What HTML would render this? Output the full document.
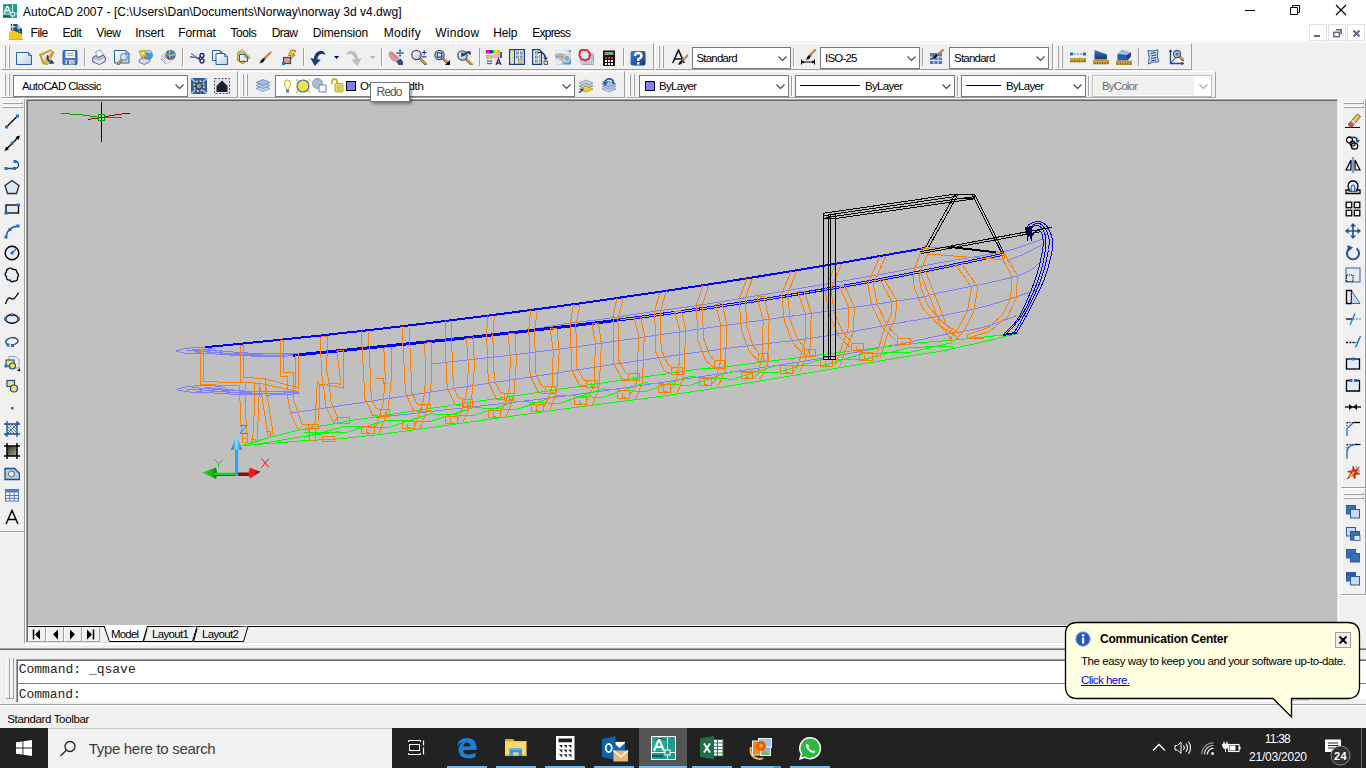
<!DOCTYPE html>
<html><head><meta charset="utf-8"><title>AutoCAD 2007</title>
<style>
html,body{margin:0;padding:0;}
body{width:1366px;height:768px;overflow:hidden;position:relative;background:#f0f0f0;font-family:"Liberation Sans",sans-serif;}
div,span,svg{position:absolute;box-sizing:border-box;}
.t{white-space:pre;display:block;}
.vl{width:1px;background:#a0a0a0;}
.hl{height:1px;background:#a0a0a0;}
.cb{background:#fff;border:1px solid #7a7a7a;}
</style></head>
<body>
<div style="left:0px;top:0px;width:1366px;height:41px;background:#fff;"></div>
<span class="t" style="left:23.00px;top:4.24px;font-size:12px;line-height:16px;letter-spacing:0.016px;">AutoCAD 2007 - [C:\Users\Dan\Documents\Norway\norway 3d v4.dwg]</span>
<span class="t" style="left:30.60px;top:24.84px;font-size:12px;line-height:16px;letter-spacing:-0.545px;">File</span>
<span class="t" style="left:62.40px;top:24.84px;font-size:12px;line-height:16px;letter-spacing:-0.393px;">Edit</span>
<span class="t" style="left:96.30px;top:24.84px;font-size:12px;line-height:16px;letter-spacing:-0.398px;">View</span>
<span class="t" style="left:135.20px;top:24.84px;font-size:12px;line-height:16px;letter-spacing:-0.242px;">Insert</span>
<span class="t" style="left:178.30px;top:24.84px;font-size:12px;line-height:16px;letter-spacing:-0.101px;">Format</span>
<span class="t" style="left:230.40px;top:24.84px;font-size:12px;line-height:16px;letter-spacing:-0.428px;">Tools</span>
<span class="t" style="left:271.70px;top:24.84px;font-size:12px;line-height:16px;letter-spacing:-0.601px;">Draw</span>
<span class="t" style="left:312.70px;top:24.84px;font-size:12px;line-height:16px;letter-spacing:-0.136px;">Dimension</span>
<span class="t" style="left:383.70px;top:24.84px;font-size:12px;line-height:16px;letter-spacing:0.331px;">Modify</span>
<span class="t" style="left:435.20px;top:24.84px;font-size:12px;line-height:16px;letter-spacing:0.264px;">Window</span>
<span class="t" style="left:493.20px;top:24.84px;font-size:12px;line-height:16px;letter-spacing:-0.160px;">Help</span>
<span class="t" style="left:532.30px;top:24.84px;font-size:12px;line-height:16px;letter-spacing:-0.775px;">Express</span>
<svg style="left:1240px;top:0px;" width="120" height="22" viewBox="0 0 120 22"><path d="M5 10.5H15" stroke="#000" fill="none"/><path d="M52.5 7.5V5.5H59.5V12.5H57.5M50.5 7.5H57.5V14.5H50.5Z" stroke="#000" fill="none"/><path d="M96 5L106 15M106 5L96 15" stroke="#000" stroke-width="1.1" fill="none"/></svg>
<div style="left:1309px;top:24px;width:18px;height:17px;background:#fff;border:1px solid #e3e3e3;"></div>
<div style="left:1328px;top:24px;width:18px;height:17px;background:#fff;border:1px solid #e3e3e3;"></div>
<div style="left:1347px;top:24px;width:18px;height:17px;background:#fff;border:1px solid #e3e3e3;"></div>
<svg style="left:1309px;top:24px;" width="57" height="18" viewBox="0 0 57 18"><rect x="5" y="11" width="6" height="2" fill="#5d6b80"/><path d="M27 5.8H32.2V10" stroke="#5d6b80" stroke-width="1.6" fill="none"/><rect x="24.8" y="8.3" width="5.6" height="4.4" stroke="#5d6b80" stroke-width="1.5" fill="none"/><path d="M44.5 6.5L50.5 12.5M50.5 6.5L44.5 12.5" stroke="#5d6b80" stroke-width="2" fill="none"/></svg>
<div style="left:0px;top:41px;width:1366px;height:2px;background:#f6f6f6;"></div>
<div style="left:1px;top:43px;width:653px;height:27px;border-top:1px solid #fff;border-left:1px solid #fff;border-right:1px solid #a0a0a0;border-bottom:1px solid #a0a0a0;"></div>
<div style="left:655px;top:43px;width:398px;height:27px;border-top:1px solid #fff;border-left:1px solid #fff;border-right:1px solid #a0a0a0;border-bottom:1px solid #a0a0a0;"></div>
<div style="left:1054px;top:43px;width:138px;height:27px;border-top:1px solid #fff;border-left:1px solid #fff;border-right:1px solid #a0a0a0;border-bottom:1px solid #a0a0a0;"></div>
<div style="left:1px;top:71px;width:237px;height:27px;border-top:1px solid #fff;border-left:1px solid #fff;border-right:1px solid #a0a0a0;border-bottom:1px solid #a0a0a0;"></div>
<div style="left:239px;top:71px;width:386px;height:27px;border-top:1px solid #fff;border-left:1px solid #fff;border-right:1px solid #a0a0a0;border-bottom:1px solid #a0a0a0;"></div>
<div style="left:626px;top:71px;width:590px;height:27px;border-top:1px solid #fff;border-left:1px solid #fff;border-right:1px solid #a0a0a0;border-bottom:1px solid #a0a0a0;"></div>
<div style="left:0px;top:98px;width:1366px;height:1px;background:#fff;"></div>
<div style="left:4px;top:46px;width:1px;height:22px;background:#fff;"></div><div style="left:5px;top:46px;width:1px;height:22px;background:#a0a0a0;"></div><div style="left:6px;top:46px;width:1px;height:22px;background:#696969;opacity:.0"></div><div style="left:8px;top:46px;width:1px;height:22px;background:#fff;"></div><div style="left:9px;top:46px;width:1px;height:22px;background:#a0a0a0;"></div><div style="left:10px;top:46px;width:1px;height:22px;background:#696969;opacity:.0"></div>
<div style="left:658px;top:46px;width:1px;height:22px;background:#fff;"></div><div style="left:659px;top:46px;width:1px;height:22px;background:#a0a0a0;"></div><div style="left:660px;top:46px;width:1px;height:22px;background:#696969;opacity:.0"></div><div style="left:662px;top:46px;width:1px;height:22px;background:#fff;"></div><div style="left:663px;top:46px;width:1px;height:22px;background:#a0a0a0;"></div><div style="left:664px;top:46px;width:1px;height:22px;background:#696969;opacity:.0"></div>
<div style="left:1057px;top:46px;width:1px;height:22px;background:#fff;"></div><div style="left:1058px;top:46px;width:1px;height:22px;background:#a0a0a0;"></div><div style="left:1059px;top:46px;width:1px;height:22px;background:#696969;opacity:.0"></div><div style="left:1061px;top:46px;width:1px;height:22px;background:#fff;"></div><div style="left:1062px;top:46px;width:1px;height:22px;background:#a0a0a0;"></div><div style="left:1063px;top:46px;width:1px;height:22px;background:#696969;opacity:.0"></div>
<div style="left:4px;top:74px;width:1px;height:22px;background:#fff;"></div><div style="left:5px;top:74px;width:1px;height:22px;background:#a0a0a0;"></div><div style="left:6px;top:74px;width:1px;height:22px;background:#696969;opacity:.0"></div><div style="left:8px;top:74px;width:1px;height:22px;background:#fff;"></div><div style="left:9px;top:74px;width:1px;height:22px;background:#a0a0a0;"></div><div style="left:10px;top:74px;width:1px;height:22px;background:#696969;opacity:.0"></div>
<div style="left:242px;top:74px;width:1px;height:22px;background:#fff;"></div><div style="left:243px;top:74px;width:1px;height:22px;background:#a0a0a0;"></div><div style="left:244px;top:74px;width:1px;height:22px;background:#696969;opacity:.0"></div><div style="left:246px;top:74px;width:1px;height:22px;background:#fff;"></div><div style="left:247px;top:74px;width:1px;height:22px;background:#a0a0a0;"></div><div style="left:248px;top:74px;width:1px;height:22px;background:#696969;opacity:.0"></div>
<div style="left:629px;top:74px;width:1px;height:22px;background:#fff;"></div><div style="left:630px;top:74px;width:1px;height:22px;background:#a0a0a0;"></div><div style="left:631px;top:74px;width:1px;height:22px;background:#696969;opacity:.0"></div><div style="left:633px;top:74px;width:1px;height:22px;background:#fff;"></div><div style="left:634px;top:74px;width:1px;height:22px;background:#a0a0a0;"></div><div style="left:635px;top:74px;width:1px;height:22px;background:#696969;opacity:.0"></div>
<div style="left:84px;top:48px;width:1px;height:18px;background:#a0a0a0;"></div>
<div style="left:85px;top:48px;width:1px;height:18px;background:#fff;"></div>
<div style="left:182px;top:48px;width:1px;height:18px;background:#a0a0a0;"></div>
<div style="left:183px;top:48px;width:1px;height:18px;background:#fff;"></div>
<div style="left:303px;top:48px;width:1px;height:18px;background:#a0a0a0;"></div>
<div style="left:304px;top:48px;width:1px;height:18px;background:#fff;"></div>
<div style="left:381px;top:48px;width:1px;height:18px;background:#a0a0a0;"></div>
<div style="left:382px;top:48px;width:1px;height:18px;background:#fff;"></div>
<div style="left:479px;top:48px;width:1px;height:18px;background:#a0a0a0;"></div>
<div style="left:480px;top:48px;width:1px;height:18px;background:#fff;"></div>
<div style="left:623px;top:48px;width:1px;height:18px;background:#a0a0a0;"></div>
<div style="left:624px;top:48px;width:1px;height:18px;background:#fff;"></div>
<div style="left:793px;top:48px;width:1px;height:18px;background:#a0a0a0;"></div>
<div style="left:794px;top:48px;width:1px;height:18px;background:#fff;"></div>
<div style="left:922px;top:48px;width:1px;height:18px;background:#a0a0a0;"></div>
<div style="left:923px;top:48px;width:1px;height:18px;background:#fff;"></div>
<div style="left:1138px;top:48px;width:1px;height:18px;background:#a0a0a0;"></div>
<div style="left:1139px;top:48px;width:1px;height:18px;background:#fff;"></div>
<div style="left:791px;top:76px;width:1px;height:20px;background:#a0a0a0;"></div>
<div style="left:792px;top:76px;width:1px;height:20px;background:#fff;"></div>
<div style="left:957px;top:76px;width:1px;height:20px;background:#a0a0a0;"></div>
<div style="left:958px;top:76px;width:1px;height:20px;background:#fff;"></div>
<div style="left:1088px;top:76px;width:1px;height:20px;background:#a0a0a0;"></div>
<div style="left:1089px;top:76px;width:1px;height:20px;background:#fff;"></div>
<div style="left:692px;top:47px;width:99px;height:22px;background:#fff;border:1px solid #7a7a7a;"></div><svg style="left:777px;top:54px;" width="12" height="9" viewBox="0 0 12 9"><path d="M1.5 2.5L5.5 6.5L9.5 2.5" stroke="#444" stroke-width="1.1" fill="none"/></svg>
<span class="t" style="left:696.40px;top:50.82px;font-size:11.5px;line-height:15px;letter-spacing:-0.768px;">Standard</span>
<div style="left:820px;top:47px;width:100px;height:22px;background:#fff;border:1px solid #7a7a7a;"></div><svg style="left:906px;top:54px;" width="12" height="9" viewBox="0 0 12 9"><path d="M1.5 2.5L5.5 6.5L9.5 2.5" stroke="#444" stroke-width="1.1" fill="none"/></svg>
<span class="t" style="left:825.00px;top:50.82px;font-size:11.5px;line-height:15px;letter-spacing:-0.787px;">ISO-25</span>
<div style="left:949px;top:47px;width:100px;height:22px;background:#fff;border:1px solid #7a7a7a;"></div><svg style="left:1035px;top:54px;" width="12" height="9" viewBox="0 0 12 9"><path d="M1.5 2.5L5.5 6.5L9.5 2.5" stroke="#444" stroke-width="1.1" fill="none"/></svg>
<span class="t" style="left:954.00px;top:50.82px;font-size:11.5px;line-height:15px;letter-spacing:-0.768px;">Standard</span>
<div style="left:13px;top:75px;width:175px;height:22px;background:#fff;border:1px solid #7a7a7a;"></div><svg style="left:174px;top:82px;" width="12" height="9" viewBox="0 0 12 9"><path d="M1.5 2.5L5.5 6.5L9.5 2.5" stroke="#444" stroke-width="1.1" fill="none"/></svg>
<span class="t" style="left:22.00px;top:78.72px;font-size:11.5px;line-height:15px;letter-spacing:-0.621px;">AutoCAD Classic</span>
<div style="left:275px;top:75px;width:300px;height:22px;background:#fff;border:1px solid #7a7a7a;"></div><svg style="left:561px;top:82px;" width="12" height="9" viewBox="0 0 12 9"><path d="M1.5 2.5L5.5 6.5L9.5 2.5" stroke="#444" stroke-width="1.1" fill="none"/></svg>
<span class="t" style="left:360.00px;top:78.72px;font-size:11.5px;line-height:15px;letter-spacing:-0.206px;">Overall width</span>
<div style="left:639px;top:75px;width:150px;height:22px;background:#fff;border:1px solid #7a7a7a;"></div><svg style="left:775px;top:82px;" width="12" height="9" viewBox="0 0 12 9"><path d="M1.5 2.5L5.5 6.5L9.5 2.5" stroke="#444" stroke-width="1.1" fill="none"/></svg>
<div style="left:645px;top:81px;width:10px;height:10px;background:#8080ff;border:1px solid #000;"></div>
<span class="t" style="left:659.00px;top:78.72px;font-size:11.5px;line-height:15px;letter-spacing:-0.698px;">ByLayer</span>
<div style="left:795px;top:75px;width:160px;height:22px;background:#fff;border:1px solid #7a7a7a;"></div><svg style="left:941px;top:82px;" width="12" height="9" viewBox="0 0 12 9"><path d="M1.5 2.5L5.5 6.5L9.5 2.5" stroke="#444" stroke-width="1.1" fill="none"/></svg>
<div style="left:800px;top:85px;width:60px;height:1px;background:#000;"></div>
<span class="t" style="left:865.00px;top:78.72px;font-size:11.5px;line-height:15px;letter-spacing:-0.698px;">ByLayer</span>
<div style="left:961px;top:75px;width:125px;height:22px;background:#fff;border:1px solid #7a7a7a;"></div><svg style="left:1072px;top:82px;" width="12" height="9" viewBox="0 0 12 9"><path d="M1.5 2.5L5.5 6.5L9.5 2.5" stroke="#444" stroke-width="1.1" fill="none"/></svg>
<div style="left:966px;top:85px;width:35px;height:1px;background:#000;"></div>
<span class="t" style="left:1006.00px;top:78.72px;font-size:11.5px;line-height:15px;letter-spacing:-0.698px;">ByLayer</span>
<div style="left:1092px;top:75px;width:120px;height:22px;background:#fff;border:1px solid #bfbfbf;"></div><div style="left:1094px;top:77px;width:100px;height:18px;background:#f0f0f0;"></div><svg style="left:1198px;top:82px;" width="12" height="9" viewBox="0 0 12 9"><path d="M1.5 2.5L5.5 6.5L9.5 2.5" stroke="#a8a8a8" stroke-width="1.1" fill="none"/></svg>
<span class="t" style="left:1102.00px;top:78.72px;font-size:11.5px;line-height:15px;letter-spacing:-0.817px;color:#6d6d6d;">ByColor</span>
<div style="left:0px;top:99px;width:1366px;height:549px;background:#f0f0f0;"></div>
<div style="left:24px;top:99px;width:1px;height:544px;background:#a0a0a0;"></div>
<div style="left:25px;top:99px;width:1px;height:544px;background:#fff;"></div>
<div style="left:26px;top:99px;width:1313px;height:546px;background:#fff;"></div>
<div style="left:26px;top:99px;width:1312px;height:545px;background:#e3e3e3;"></div>
<div style="left:26px;top:99px;width:1311px;height:544px;background:#a0a0a0;"></div>
<div style="left:27px;top:100px;width:1310px;height:543px;background:#696969;"></div>
<div style="left:28px;top:101px;width:1309px;height:524px;background:#c0c0c0;"></div>
<div style="left:28px;top:625px;width:1309px;height:1px;background:#fff;"></div>
<div style="left:28px;top:626px;width:1309px;height:1px;background:#000;"></div>
<div style="left:28px;top:627px;width:1309px;height:15px;background:#f0f0f0;"></div>
<div style="left:26px;top:642px;width:1312px;height:1px;background:#e3e3e3;"></div>
<div style="left:26px;top:643px;width:1313px;height:2px;background:#fff;"></div>
<div style="left:3px;top:102px;width:20px;height:1px;background:#fff;"></div>
<div style="left:3px;top:103px;width:20px;height:1px;background:#a0a0a0;"></div>
<div style="left:22px;top:102px;width:1px;height:2px;background:#a0a0a0;"></div>
<div style="left:3px;top:106px;width:20px;height:1px;background:#fff;"></div>
<div style="left:3px;top:107px;width:20px;height:1px;background:#a0a0a0;"></div>
<div style="left:22px;top:106px;width:1px;height:2px;background:#a0a0a0;"></div>
<div style="left:0px;top:531px;width:24px;height:1px;background:#a0a0a0;"></div>
<div style="left:0px;top:532px;width:24px;height:1px;background:#fff;"></div>
<div style="left:1341px;top:99px;width:1px;height:496px;background:#fff;"></div>
<div style="left:1365px;top:99px;width:1px;height:496px;background:#a0a0a0;"></div>
<div style="left:1344px;top:102px;width:20px;height:1px;background:#fff;"></div>
<div style="left:1344px;top:103px;width:20px;height:1px;background:#a0a0a0;"></div>
<div style="left:1363px;top:102px;width:1px;height:2px;background:#a0a0a0;"></div>
<div style="left:1344px;top:106px;width:20px;height:1px;background:#fff;"></div>
<div style="left:1344px;top:107px;width:20px;height:1px;background:#a0a0a0;"></div>
<div style="left:1363px;top:106px;width:1px;height:2px;background:#a0a0a0;"></div>
<div style="left:1341px;top:487px;width:25px;height:1px;background:#a0a0a0;"></div>
<div style="left:1341px;top:488px;width:25px;height:1px;background:#fff;"></div>
<div style="left:1344px;top:493px;width:20px;height:1px;background:#fff;"></div>
<div style="left:1344px;top:494px;width:20px;height:1px;background:#a0a0a0;"></div>
<div style="left:1363px;top:493px;width:1px;height:2px;background:#a0a0a0;"></div>
<div style="left:1344px;top:497px;width:20px;height:1px;background:#fff;"></div>
<div style="left:1344px;top:498px;width:20px;height:1px;background:#a0a0a0;"></div>
<div style="left:1363px;top:497px;width:1px;height:2px;background:#a0a0a0;"></div>
<div style="left:1341px;top:594px;width:25px;height:1px;background:#a0a0a0;"></div>
<div style="left:1341px;top:595px;width:25px;height:1px;background:#fff;"></div>
<div style="left:28px;top:627px;width:18px;height:15px;border-right:1px solid #a0a0a0;border-bottom:1px solid #a0a0a0;border-left:1px solid #fff;background:#f0f0f0;"></div>
<div style="left:46px;top:627px;width:18px;height:15px;border-right:1px solid #a0a0a0;border-bottom:1px solid #a0a0a0;border-left:1px solid #fff;background:#f0f0f0;"></div>
<div style="left:64px;top:627px;width:18px;height:15px;border-right:1px solid #a0a0a0;border-bottom:1px solid #a0a0a0;border-left:1px solid #fff;background:#f0f0f0;"></div>
<div style="left:82px;top:627px;width:18px;height:15px;border-right:1px solid #a0a0a0;border-bottom:1px solid #a0a0a0;border-left:1px solid #fff;background:#f0f0f0;"></div>
<svg style="left:28px;top:626px;" width="72" height="17" viewBox="0 0 72 17"><path d="M5.500 3.500V13.500" stroke="#000" stroke-width="1.5"/><path d="M12 3.500L7 8.5L12 13.500Z" fill="#000"/><path d="M30 3.500L25 8.5L30 13.500Z" fill="#000"/><path d="M42 3.500L47 8.5L42 13.500Z" fill="#000"/><path d="M59 3.500L64 8.5L59 13.500Z" fill="#000"/><path d="M65.500 3.500V13.500" stroke="#000" stroke-width="1.5"/></svg>
<svg style="left:100px;top:626px;" width="160" height="18" viewBox="0 0 160 18"><path d="M4 0L9.5 15.5H43L47.5 0" fill="#fff" stroke="#000"/><path d="M47 3L43.5 15.5H92.500L97 0.5" fill="#f0f0f0" stroke="#000"/><path d="M97 3L93.500 15.5H143.500L148 0.5" fill="#f0f0f0" stroke="#000"/></svg>
<span class="t" style="left:111.00px;top:626.52px;font-size:11.5px;line-height:15px;letter-spacing:-0.830px;">Model</span>
<span class="t" style="left:152.00px;top:626.52px;font-size:11.5px;line-height:15px;letter-spacing:-0.654px;">Layout1</span>
<span class="t" style="left:202.00px;top:626.52px;font-size:11.5px;line-height:15px;letter-spacing:-0.654px;">Layout2</span>
<div style="left:0px;top:648px;width:1366px;height:1px;background:#a0a0a0;"></div>
<div style="left:0px;top:649px;width:1366px;height:1px;background:#696969;"></div>
<div style="left:6px;top:658px;width:1px;height:41px;background:#fff;"></div>
<div style="left:9px;top:658px;width:1px;height:41px;background:#a0a0a0;"></div>
<div style="left:6px;top:698px;width:4px;height:1px;background:#a0a0a0;"></div>
<div style="left:10px;top:658px;width:1px;height:41px;background:#fff;"></div>
<div style="left:13px;top:658px;width:1px;height:41px;background:#a0a0a0;"></div>
<div style="left:10px;top:698px;width:4px;height:1px;background:#a0a0a0;"></div>
<div style="left:16px;top:659px;width:1350px;height:43px;background:#fff;border-left:1px solid #a0a0a0;border-top:1px solid #a0a0a0;"></div>
<div style="left:17px;top:660px;width:1349px;height:42px;background:#fff;border-left:1px solid #696969;border-top:1px solid #696969;"></div>
<div style="left:18px;top:683px;width:1348px;height:1px;background:#808080;"></div>
<span class="t" style="left:18.70px;top:660.74px;font-size:13px;line-height:17px;letter-spacing:-0.002px;color:#222;font-family:'Liberation Mono',monospace;">Command: _qsave</span>
<span class="t" style="left:18.70px;top:685.64px;font-size:13px;line-height:17px;letter-spacing:-0.059px;color:#222;font-family:'Liberation Mono',monospace;">Command:</span>
<div style="left:1292px;top:699px;width:17px;height:2px;background:#cdcdcd;"></div>
<div style="left:1309px;top:699px;width:57px;height:3px;background:#f0f0f0;"></div>
<div style="left:0px;top:704px;width:1366px;height:1px;background:#a0a0a0;"></div>
<div style="left:0px;top:705px;width:1366px;height:1px;background:#fff;"></div>
<span class="t" style="left:7.30px;top:711.72px;font-size:11.5px;line-height:15px;letter-spacing:-0.359px;">Standard Toolbar</span>
<div style="left:0px;top:728px;width:1366px;height:40px;background:#222;"></div>
<div style="left:48px;top:728px;width:344px;height:40px;background:#f2f2f2;border-top:1px solid #c8c8c8;"></div>
<span class="t" style="left:88.70px;top:738.80px;font-size:15px;line-height:20px;letter-spacing:-0.310px;color:#3c3c3c;">Type here to search</span>
<svg style="left:16px;top:740px;" width="16" height="16" viewBox="0 0 16 16"><path d="M0 2.3L6.5 1.4V7.6H0ZM7.4 1.3L16 0V7.6H7.4ZM0 8.4H6.5V14.6L0 13.7ZM7.4 8.4H16V16L7.4 14.7Z" fill="#fff"/></svg>
<svg style="left:59px;top:740px;" width="18" height="18" viewBox="0 0 18 18"><circle cx="11" cy="6.5" r="5" stroke="#222" stroke-width="1.3" fill="none"/><path d="M7.5 10L1.5 16" stroke="#222" stroke-width="1.3"/></svg>
<div style="left:639px;top:728px;width:48px;height:40px;background:#555;"></div>
<div style="left:447px;top:766px;width:40px;height:2px;background:#76b9ed;"></div>
<div style="left:496px;top:766px;width:40px;height:2px;background:#76b9ed;"></div>
<div style="left:545px;top:766px;width:40px;height:2px;background:#76b9ed;"></div>
<div style="left:594px;top:766px;width:40px;height:2px;background:#76b9ed;"></div>
<div style="left:692px;top:766px;width:40px;height:2px;background:#76b9ed;"></div>
<div style="left:741px;top:766px;width:40px;height:2px;background:#76b9ed;"></div>
<div style="left:790px;top:766px;width:40px;height:2px;background:#76b9ed;"></div>
<div style="left:639px;top:766px;width:48px;height:2px;background:#76b9ed;"></div>
<span class="t" style="left:1264.80px;top:731.24px;font-size:12px;line-height:16px;letter-spacing:-0.785px;color:#fff;">11:38</span>
<span class="t" style="left:1249.00px;top:749.14px;font-size:12px;line-height:16px;letter-spacing:-0.229px;color:#fff;">21/03/2020</span>
<div style="left:1361px;top:728px;width:1px;height:40px;background:#6a6a6a;"></div>
<svg style="left:1060px;top:618px;" width="306" height="104" viewBox="0 0 306 104"><path d="M17.5 4.5H287.5Q299.5 4.5 299.5 16.5V68.5Q299.5 80.5 287.5 80.5H231.5V99L213 80.5H17.5Q5.5 80.5 5.5 68.5V16.5Q5.5 4.5 17.5 4.5Z" fill="#ffffe1" stroke="#000" stroke-width="1.300"/></svg>
<span class="t" style="left:1100.00px;top:630.84px;font-size:12px;line-height:16px;letter-spacing:-0.211px;font-weight:bold;">Communication Center</span>
<span class="t" style="left:1081.00px;top:653.52px;font-size:11.5px;line-height:15px;letter-spacing:-0.415px;">The easy way to keep you and your software up-to-date.</span>
<span class="t" style="left:1081.00px;top:672.52px;font-size:11.5px;line-height:15px;letter-spacing:-0.532px;color:#0000ff;text-decoration:underline;">Click here.</span>
<div style="left:1335px;top:632px;width:16px;height:16px;background:#f0f0f0;border:1px solid #a0a0a0;"></div>
<svg style="left:1335px;top:632px;" width="16" height="16" viewBox="0 0 16 16"><path d="M4.5 4.5L11.5 11.5M11.5 4.5L4.5 11.5" stroke="#000" stroke-width="2" fill="none"/></svg>
<svg style="left:1075px;top:631px;" width="16" height="16" viewBox="0 0 16 16"><circle cx="8" cy="8" r="7.3" fill="#2a55c8" stroke="#9fb4e8" stroke-width="1"/><rect x="7" y="6.5" width="2.2" height="6" fill="#fff"/><circle cx="8.1" cy="4.3" r="1.3" fill="#fff"/></svg>
<div style="left:370px;top:82px;width:40px;height:20px;background:#fff;border:1px solid #767676;box-shadow:2px 2px 3px rgba(0,0,0,.4);"></div>
<span class="t" style="left:376.50px;top:84.14px;font-size:12px;line-height:16px;letter-spacing:-0.896px;color:#575757;">Redo</span>
<svg style="left:16px;top:49px;" width="16" height="16" viewBox="0 0 16 16"><defs><linearGradient id="g1" x1="0" y1="0" x2="1" y2="1"><stop offset="0" stop-color="#ffffff"/><stop offset="1" stop-color="#b9d5dc"/></linearGradient></defs><path d="M0.5 3.5H12.5L15.5 6.5V15.5H0.5Z" fill="url(#g1)" stroke="#2b5ca8" stroke-width="1"/><path d="M12.5 3.5V6.5H15.5" fill="none" stroke="#2b5ca8" stroke-width=".8"/></svg>
<svg style="left:39px;top:49px;" width="16" height="16" viewBox="0 0 16 16"><path d="M.5 5.500L11.500 .8L15 3.500L8.500 15.500L4 15Z" fill="#dcaa30" stroke="#a87c18" stroke-width=".7"/><path d="M2.500 6.500L11.500 2L12.500 3L5 12Z" fill="#f0d890"/><path d="M3 7.500L12 2.800L6 12.500Z" fill="#dbe8f6"/><path d="M5 13L8.500 15.500L12 9L7 8Z" fill="#e6b83c"/><path d="M9 6.500Q7 10.500 11.500 12.800" stroke="#1f3f7a" stroke-width="1.900" fill="none"/><path d="M10 15L15.500 14.500L12.500 10.500Z" fill="#1f3f7a"/></svg>
<svg style="left:62px;top:49px;" width="16" height="16" viewBox="0 0 16 16"><rect x="1" y="1.500" width="14" height="14" rx="1" fill="#4878d0" stroke="#2c4c9c" stroke-width=".9"/><rect x="3.500" y="2" width="9.500" height="7" fill="#f2f6fc"/><path d="M5 4.500H11.500M5 6.500H11.500" stroke="#8ca8d8" stroke-width=".9"/><rect x="3.500" y="11" width="9" height="4.500" fill="#d0d8e4"/><rect x="5" y="11.500" width="2" height="4" fill="#3c64b8"/><rect x="9" y="12" width="2.500" height="3" fill="#b8b888"/></svg>
<svg style="left:91px;top:49px;" width="16" height="16" viewBox="0 0 16 16"><path d="M4.500 3L9 .8L12.500 6L7 8.500Z" fill="#fff" stroke="#8890b8" stroke-width=".9"/><path d="M1.500 8.500L5 6.500L7 8.500L12.500 6L14.500 9L14 12.500L8.500 15.500L2 13Z" fill="#b4bcdc" stroke="#4f5a98" stroke-width="1"/><path d="M3 11L8 13L13.500 10" stroke="#fff" stroke-width="1.300" fill="none"/><path d="M4 12.500L8.500 14.500L12.500 12" stroke="#e8ecf8" stroke-width="1" fill="none"/></svg>
<svg style="left:114px;top:49px;" width="16" height="16" viewBox="0 0 16 16"><defs><linearGradient id="g2" x1="0" y1="0" x2="1" y2="1"><stop offset="0" stop-color="#ffffff"/><stop offset="1" stop-color="#b9d5dc"/></linearGradient></defs><path d="M0.5 1.5H12L15 4.5V14H0.5Z" fill="url(#g2)" stroke="#2b5ca8" stroke-width="1"/><path d="M12 1.5V4.5H15" fill="none" stroke="#2b5ca8" stroke-width=".8"/><defs><linearGradient id="g3" x1="0" y1="0" x2="1" y2="1"><stop offset="0" stop-color="#ffffff"/><stop offset="1" stop-color="#9cc4e8"/></linearGradient></defs><path d="M7.94 10.58L4 15.5" stroke="#8a5a20" stroke-width="2.600" stroke-linecap="round"/><path d="M8.24 10.58L4 15.2" stroke="#e8a550" stroke-width="1.200" stroke-linecap="round"/><circle cx="10" cy="8" r="3.3" fill="url(#g3)" stroke="#7a98c4" stroke-width="1.300"/></svg>
<svg style="left:137px;top:49px;" width="16" height="16" viewBox="0 0 16 16"><circle cx="11" cy="6" r="5" fill="#3f9ad8"/><path d="M8 3Q11 1 14 4" stroke="#bfe8ff" stroke-width="1.5" fill="none"/><path d="M2 11L6 9L13 10.5L12.5 13L7.5 15.5L2.5 13.5Z" fill="#d5daee" stroke="#5f6aa8" stroke-width=".9"/><path d="M2 2L8.5 1L9.5 7L4.5 9Z" fill="#e6bb28" stroke="#b88a10" stroke-width=".6"/><path d="M4.5 3.5L5.5 5.5L7 3" stroke="#fff" stroke-width="1" fill="none"/></svg>
<svg style="left:160px;top:49px;" width="16" height="16" viewBox="0 0 16 16"><path d="M1 6L6 4V12L1 10Z" fill="#c9d6ee"/><path d="M1 10L6 15L11 12" fill="none" stroke="#8a93a8" stroke-width="1"/><path d="M6 4L11 6V12L6 15Z" fill="#f4f7fc"/><circle cx="10.5" cy="6" r="5.3" fill="#2e8fd0"/><path d="M6 5Q10 8 15.5 5M10 .8Q8 6 11 11.2" stroke="#e8c020" stroke-width="1.1" fill="none"/><path d="M6.5 8.5Q11 10 15 8M8 1.5Q7 6 9 11" stroke="#d03030" stroke-width="1" fill="none"/></svg>
<svg style="left:189px;top:49px;" width="16" height="16" viewBox="0 0 16 16"><path d="M1 7.5L10 9.5M2 4.5L10 10" stroke="#3a4a8a" stroke-width="1" fill="none"/><path d="M1 8.5L10.5 9.5L1.5 7Z" fill="#6070a8"/><circle cx="13" cy="6.5" r="2" fill="none" stroke="#1a2a6a" stroke-width="1.3"/><circle cx="13" cy="12" r="2" fill="none" stroke="#1a2a6a" stroke-width="1.3"/><path d="M9.5 9.5L11.5 7.5M9.5 9.5L11.5 11" stroke="#1a2a6a" stroke-width="1.3"/></svg>
<svg style="left:212px;top:49px;" width="16" height="16" viewBox="0 0 16 16"><defs><linearGradient id="g4" x1="0" y1="0" x2="1" y2="1"><stop offset="0" stop-color="#ffffff"/><stop offset="1" stop-color="#b9d5dc"/></linearGradient></defs><path d="M0.5 1.5H8L10.5 4V11.5H0.5Z" fill="url(#g4)" stroke="#2b5ca8" stroke-width="1"/><path d="M8 1.5V4H10.5" fill="none" stroke="#2b5ca8" stroke-width=".8"/><defs><linearGradient id="g5" x1="0" y1="0" x2="1" y2="1"><stop offset="0" stop-color="#ffffff"/><stop offset="1" stop-color="#b9d5dc"/></linearGradient></defs><path d="M4 4.5H12.5L15.5 7.5V15.5H4Z" fill="url(#g5)" stroke="#2b5ca8" stroke-width="1"/><path d="M12.5 4.5V7.5H15.5" fill="none" stroke="#2b5ca8" stroke-width=".8"/></svg>
<svg style="left:235px;top:49px;" width="16" height="16" viewBox="0 0 16 16"><path d="M3 3L8 1.5L15 8.5L8 15L2 11Z" fill="#e6c04a" stroke="#b8922a" stroke-width="1"/><path d="M5 2.5L7 .5L9 2" fill="#fff" stroke="#666" stroke-width=".7"/><defs><linearGradient id="g6" x1="0" y1="0" x2="1" y2="1"><stop offset="0" stop-color="#ffffff"/><stop offset="1" stop-color="#b9d5dc"/></linearGradient></defs><path d="M4.5 5.5H10L12.5 8V12.5H4.5Z" fill="url(#g6)" stroke="#2b5ca8" stroke-width="1"/><path d="M10 5.5V8H12.5" fill="none" stroke="#2b5ca8" stroke-width=".8"/></svg>
<svg style="left:258px;top:49px;" width="16" height="16" viewBox="0 0 16 16"><path d="M1.50 14.50L5.12 13.28L7.23 10.33L5.67 8.77L3.14 11.30Z" fill="#111"/><path d="M6.45 9.55L8.10 7.90" stroke="#5a6a70" stroke-width="2.200"/><path d="M8.10 7.90L12.50 3.50" stroke="#c98a4a" stroke-width="2.400" stroke-linecap="round"/></svg>
<svg style="left:281px;top:49px;" width="16" height="16" viewBox="0 0 16 16"><path d="M10 1L15 1.5L11.5 6H14L8 12L10 6.5H7.5Z" fill="#f2d21e" stroke="#7a5a10" stroke-width=".7"/><rect x="2.5" y="8.500" width="7" height="6" fill="#f49a6a" stroke="#1f4b8f" stroke-width="1.2"/><rect x="1" y="13" width="3" height="3" fill="#1e6fd0"/></svg>
<svg style="left:310px;top:50px;" width="16" height="16" viewBox="0 0 16 16"><path d="M15.500 5Q14.500 .8 10.500 .8Q5 1.500 3.800 8.800L.3 8L4.800 16L10.800 9.800L7.300 9.300Q8 4.800 11 4Q13.500 3.500 15.500 5Z" fill="#1c3f7c"/></svg>
<svg style="left:346px;top:50px;" width="16" height="16" viewBox="0 0 16 16"><path d="M0.5 5 Q1.5 0.8 5.5 0.8 Q11 1.5 12.2 8.8 L15.7 8 L11.2 16 L5.2 9.8 L8.7 9.3 Q8 4.8 5 4 Q2.5 3.5 0.5 5 Z" fill="#b9bec6"/></svg>
<svg style="left:388px;top:49px;" width="16" height="16" viewBox="0 0 16 16"><path d="M1 4Q2 2 4 3L11 9L9 13L4 11Q1 8 1 4Z" fill="#d99a9a" stroke="#b87878" stroke-width=".6"/><path d="M2.500 4L8 9M4 3.500L9 8" stroke="#b06a6a" stroke-width=".6"/><path d="M8.500 12.500L12.500 9.500L15 12.500V16H10.500Z" fill="#24508f"/><path d="M12 1V7M9 4H15" stroke="#24508f" stroke-width="1"/><path d="M12 0L13.300 1.800H10.700ZM12 8L13.300 6.200H10.700ZM8 4L9.800 2.700V5.300ZM16 4L14.200 2.700V5.300Z" fill="#24508f"/></svg>
<svg style="left:411px;top:49px;" width="16" height="16" viewBox="0 0 16 16"><defs><linearGradient id="g7" x1="0" y1="0" x2="1" y2="1"><stop offset="0" stop-color="#ffffff"/><stop offset="1" stop-color="#9cc4e8"/></linearGradient></defs><path d="M8.75 9.25L14.5 15" stroke="#8a5a20" stroke-width="2.600" stroke-linecap="round"/><path d="M9.05 9.25L14.5 14.7" stroke="#e8a550" stroke-width="1.200" stroke-linecap="round"/><circle cx="5.5" cy="6" r="4.6" fill="url(#g7)" stroke="#4a4f58" stroke-width="1.300"/><path d="M11 3.500H15.500M13.250 1.200V5.800M11 7.800H15.500" stroke="#1f3f7a" stroke-width="1.200"/></svg>
<svg style="left:434px;top:49px;" width="16" height="16" viewBox="0 0 16 16"><defs><linearGradient id="g8" x1="0" y1="0" x2="1" y2="1"><stop offset="0" stop-color="#ffffff"/><stop offset="1" stop-color="#9cc4e8"/></linearGradient></defs><path d="M8.75 9.25L12.5 13" stroke="#8a5a20" stroke-width="2.600" stroke-linecap="round"/><path d="M9.05 9.25L12.5 12.7" stroke="#e8a550" stroke-width="1.200" stroke-linecap="round"/><circle cx="5.5" cy="6" r="4.6" fill="url(#g8)" stroke="#4a4f58" stroke-width="1.300"/><rect x="3.300" y="3.800" width="4.400" height="4.400" fill="none" stroke="#1f3f8f" stroke-width="1.200"/><path d="M16 11V16H11Z" fill="#000"/></svg>
<svg style="left:457px;top:49px;" width="16" height="16" viewBox="0 0 16 16"><defs><linearGradient id="g9" x1="0" y1="0" x2="1" y2="1"><stop offset="0" stop-color="#ffffff"/><stop offset="1" stop-color="#9cc4e8"/></linearGradient></defs><path d="M8.75 9.75L14.5 15.5" stroke="#8a5a20" stroke-width="2.600" stroke-linecap="round"/><path d="M9.05 9.75L14.5 15.2" stroke="#e8a550" stroke-width="1.200" stroke-linecap="round"/><circle cx="5.5" cy="6.5" r="4.6" fill="url(#g9)" stroke="#4a4f58" stroke-width="1.300"/><path d="M14 5Q14 1 10 2.500L10.500 4.500Q12.500 3.500 12 6Z" fill="#1f3f7a"/><path d="M4 8L4.500 3L9 6Z" fill="#1f3f7a"/><path d="M6 6L10.500 3" stroke="#1f3f7a" stroke-width="1.800"/></svg>
<svg style="left:486px;top:49px;" width="16" height="16" viewBox="0 0 16 16"><defs><linearGradient id="rb" x1="0" x2="1" y1="0" y2="0"><stop offset="0" stop-color="#f00"/><stop offset=".2" stop-color="#f0f"/><stop offset=".4" stop-color="#00f"/><stop offset=".55" stop-color="#0f0"/><stop offset=".75" stop-color="#ff0"/><stop offset="1" stop-color="#f60"/></linearGradient></defs><rect x="0" y="1" width="13.500" height="3.500" fill="url(#rb)"/><path d="M4 8L11 3.500L14 5.500V8L9 10Z" fill="#e8b4b0"/><rect x="14" y="3" width="2" height="6" fill="#2a60b0"/><rect x="0" y="6.500" width="5.500" height="3" fill="#d8d048" stroke="#8890a0" stroke-width=".5"/><path d="M1 11.500Q3.500 13 6 11.500M1 14Q3.500 15.500 6 14" stroke="#3a5aa0" stroke-width="1.200" fill="none"/><path d="M10 16L12.500 9.500L15 16M11 14H14" stroke="#2a3550" stroke-width="1.300" fill="none"/></svg>
<svg style="left:509px;top:49px;" width="16" height="16" viewBox="0 0 16 16"><rect x=".6" y=".6" width="14.800" height="14.800" fill="#dfe8f4" stroke="#173c80" stroke-width="1.200"/><path d="M5.500 1V15" stroke="#173c80"/><path d="M3.500 2V14" stroke="#e8d020" stroke-width="1.400" stroke-dasharray="1.500 1.500"/><rect x="7.5" y="3" width="2" height="2" fill="#e8e040" stroke="#24508f" stroke-width=".5"/><rect x="11.5" y="3" width="2" height="2" fill="#e8e040" stroke="#24508f" stroke-width=".5"/><rect x="7.5" y="7" width="2" height="2" fill="#e8e040" stroke="#24508f" stroke-width=".5"/><rect x="11.5" y="7" width="2" height="2" fill="#e8e040" stroke="#24508f" stroke-width=".5"/><rect x="9.500" y="10.500" width="3.500" height="3.500" fill="#f0e850" stroke="#24508f" stroke-width=".5"/></svg>
<svg style="left:532px;top:49px;" width="16" height="16" viewBox="0 0 16 16"><path d="M.6 .6H7.500L9.500 2.500V15.400H.6Z" fill="#dfe8f4" stroke="#173c80" stroke-width="1.200"/><path d="M7.500 6V15" stroke="#8aa0c8"/><rect x="3.5" y="3" width="2" height="2" fill="#e8e040" stroke="#24508f" stroke-width=".5"/><rect x="3.5" y="7" width="2" height="2" fill="#e8e040" stroke="#24508f" stroke-width=".5"/><rect x="3.5" y="11" width="2" height="2" fill="#e8e040" stroke="#24508f" stroke-width=".5"/><path d="M6 3.500Q12 2 13.500 9" stroke="#173c80" stroke-width="1.600" fill="none"/><path d="M11 8.500H16L13.500 11.500Z" fill="#173c80"/><rect x="12" y="12" width="3.500" height="3.500" fill="#f0e850" stroke="#173c80" stroke-width=".8"/></svg>
<svg style="left:555px;top:49px;" width="16" height="16" viewBox="0 0 16 16"><rect x="0" y="1" width="16" height="14.500" fill="#5c9ad0"/><path d="M0 1H13L16 4V9L6 15.500H0Z" fill="#d4dade"/><path d="M0 5.500Q6 2.500 12 6Q15 9 13 12L6 15.500Q9 11 0 9.500Z" fill="#b4bcc2"/><path d="M0 9.500Q8 10 7 15.500H0Z" fill="#e4e8ec"/><ellipse cx="12" cy="9.500" rx="2.800" ry="3.500" fill="#9aa2aa" stroke="#e8ecf0" stroke-width=".9"/><path d="M1 3Q7 1.500 12 4.500" stroke="#fff" stroke-width="1.300" fill="none"/><path d="M1 7.500Q6 6 10 9" stroke="#8a9298" stroke-width=".9" fill="none"/></svg>
<svg style="left:578px;top:49px;" width="16" height="16" viewBox="0 0 16 16"><path d="M5 4.500H15.500V15.500H4" fill="none" stroke="#9aa8c0"/><path d="M3.500 6H14V14H2.500" fill="none" stroke="#8a98b4"/><rect x="1.500" y="5" width="11" height="8" fill="#b4ccee"/><path d="M3 1.500Q5 -.3 7 1.300Q10 .3 10.500 3Q13 4.500 11.300 7Q12.300 10 9.300 10.300Q7.500 12.300 5.500 10.500Q2.500 11 2.500 8Q.3 6.500 2 4.300Q1 2 3 1.500Z" fill="#dfe8f6" stroke="#e81828" stroke-width="1.800"/></svg>
<svg style="left:601px;top:50px;" width="16" height="16" viewBox="0 0 16 16"><rect x="2" y="0.500" width="12" height="15.500" fill="#111"/><rect x="3.500" y="2" width="9" height="3" fill="#7fa070"/><rect x="4" y="7" width="2" height="2" fill="#e02020"/><rect x="7" y="7" width="2" height="2" fill="#e02020"/><rect x="10" y="7" width="2" height="2" fill="#e02020"/><rect x="4" y="10" width="2" height="2" fill="#fff"/><rect x="4" y="13" width="2" height="2" fill="#fff"/><rect x="7" y="10" width="2" height="2" fill="#fff"/><rect x="7" y="13" width="2" height="2" fill="#fff"/><rect x="10" y="10" width="2" height="2" fill="#fff"/><rect x="10" y="13" width="2" height="2" fill="#fff"/></svg>
<svg style="left:630px;top:50px;" width="16" height="16" viewBox="0 0 16 16"><defs><linearGradient id="hg" x1="0" y1="0" x2="1" y2="1"><stop offset="0" stop-color="#3a7fd0"/><stop offset="1" stop-color="#123a78"/></linearGradient></defs><rect x=".5" y="1" width="15" height="14.500" rx="2" fill="url(#hg)"/><path d="M5 6Q5 3 8 3Q11.500 3 11.500 6Q11.500 8 8.300 9V11" stroke="#fff" stroke-width="2.300" fill="none"/><rect x="7" y="12.200" width="2.500" height="2.300" fill="#fff"/></svg>
<svg style="left:672px;top:49px;" width="16" height="16" viewBox="0 0 16 16"><path d="M.8 14L6.500 1L12.200 14M3 10H10" stroke="#111" stroke-width="1.600" fill="none"/><path d="M6.00 16.00L9.29 15.11L11.05 12.50L9.50 10.95L7.31 13.13Z" fill="#111"/><path d="M10.28 11.72L11.70 10.30" stroke="#5a6a70" stroke-width="2.200"/><path d="M11.70 10.30L15.50 6.50" stroke="#c98a4a" stroke-width="2.400" stroke-linecap="round"/></svg>
<svg style="left:800px;top:49px;" width="16" height="16" viewBox="0 0 16 16"><path d="M1 13H15M1.500 10.500V15.500M14.500 10.500V15.500" stroke="#000" stroke-width="1"/><path d="M1 13L4 11.500V14.500ZM15 13L12 11.500V14.500Z" fill="#000"/><path d="M6.00 11.00L9.24 9.94L10.87 7.24L9.23 5.76L7.16 8.06Z" fill="#111"/><path d="M10.05 6.50L11.40 5.00" stroke="#5a6a70" stroke-width="2.200"/><path d="M11.40 5.00L15.00 1.00" stroke="#c98a4a" stroke-width="2.400" stroke-linecap="round"/></svg>
<svg style="left:929px;top:49px;" width="16" height="16" viewBox="0 0 16 16"><rect x="1" y="4" width="12" height="11" fill="#5577c8"/><path d="M1 8H13M1 11.500H13M5 7V15M9 7V15" stroke="#dfe6f6" stroke-width="1"/><path d="M3.00 10.00L6.50 9.34L8.65 6.80L7.25 5.10L4.72 7.17Z" fill="#111"/><path d="M7.95 5.95L9.60 4.60" stroke="#5a6a70" stroke-width="2.200"/><path d="M9.60 4.60L14.00 1.00" stroke="#c98a4a" stroke-width="2.400" stroke-linecap="round"/></svg>
<svg style="left:1070px;top:49px;" width="16" height="16" viewBox="0 0 16 16"><rect x="0" y="3.5" width="3" height="3" fill="#1e6fd0"/><rect x="13" y="3.5" width="3" height="3" fill="#1e6fd0"/><path d="M3.500 5H13" stroke="#1e6fd0" stroke-width="1.200" stroke-dasharray="2 1.300"/><rect x="0" y="9.5" width="16" height="3.500" fill="#e0a818" stroke="#8a6408" stroke-width=".5"/><path d="M2 11V13M4.500 11V13M7 11V13M9.500 11V13M12 11V13M14.500 11V13" stroke="#5a4000" stroke-width=".7"/></svg>
<svg style="left:1093px;top:49px;" width="16" height="16" viewBox="0 0 16 16"><defs><linearGradient id="ar" x1="0" y1="0" x2="0" y2="1"><stop offset="0" stop-color="#3c74c0"/><stop offset="1" stop-color="#173a78"/></linearGradient></defs><path d="M1.500 1L14 5.500V10.500H1.500Z" fill="url(#ar)"/><rect x="0" y="11.5" width="16" height="3.500" fill="#e0a818" stroke="#8a6408" stroke-width=".5"/><path d="M2 13V15M4.500 13V15M7 13V15M9.500 13V15M12 13V15M14.500 13V15" stroke="#5a4000" stroke-width=".7"/></svg>
<svg style="left:1116px;top:49px;" width="16" height="16" viewBox="0 0 16 16"><path d="M1.500 5L6 1L15 3.500V7L11.500 11.500H1.500Z" fill="#2d5da8"/><path d="M1.500 5L6 1L15 3.500L11 6Z" fill="#9ec0e8"/><path d="M11 6L15 3.500V7L11.500 11.500Z" fill="#1d3f80"/><rect x="0" y="12" width="16" height="3.500" fill="#e0a818" stroke="#8a6408" stroke-width=".5"/><path d="M2 13.5V15.5M4.500 13.5V15.5M7 13.5V15.5M9.500 13.5V15.5M12 13.5V15.5M14.500 13.5V15.5" stroke="#5a4000" stroke-width=".7"/></svg>
<svg style="left:1145px;top:49px;" width="16" height="16" viewBox="0 0 16 16"><path d="M3 1.500Q8 3 13 .8Q11.500 7 13.500 13Q8 12 3.500 15Q5 8 3 1.500Z" fill="#c6d6ec" stroke="#3a62a8" stroke-width="1"/><path d="M5.500 4.500L11 3.500M5.800 7L11.200 6M6 9.500L11.500 8.500M6 12L11 11" stroke="#1f3f7a" stroke-width=".9"/></svg>
<svg style="left:1168px;top:49px;" width="16" height="16" viewBox="0 0 16 16"><path d="M2.500 1V14.500H16" stroke="#1f4b8f" stroke-width="1.300" fill="none"/><path d="M2.500 0L4.300 3H.7ZM16 14.500L13 12.700V16.300Z" fill="#1f4b8f"/><path d="M3 14L8 8" stroke="#1f4b8f" stroke-width="1.100"/><defs><linearGradient id="g10" x1="0" y1="0" x2="1" y2="1"><stop offset="0" stop-color="#ffffff"/><stop offset="1" stop-color="#9cc4e8"/></linearGradient></defs><path d="M11.47 7.47L15 11" stroke="#8a5a20" stroke-width="2.600" stroke-linecap="round"/><path d="M11.77 7.47L15 10.7" stroke="#e8a550" stroke-width="1.200" stroke-linecap="round"/><circle cx="9" cy="5" r="3.5" fill="url(#g10)" stroke="#4a4f58" stroke-width="1.300"/><rect x="7.500" y="3.500" width="3" height="3" fill="#1e6fd0"/></svg>
<svg style="left:334px;top:56px;" width="6" height="4" viewBox="0 0 6 4"><path d="M0 0H5L2.500 3Z" fill="#00007a"/></svg>
<svg style="left:370px;top:56px;" width="6" height="4" viewBox="0 0 6 4"><path d="M0 0H5L2.500 3Z" fill="#b4b4c8"/></svg>
<svg style="left:191px;top:78px;" width="16" height="16" viewBox="0 0 16 16"><rect x="0" y="0" width="16" height="16" fill="#2f5f98"/><path d="M0 0L4 4M16 0L12 4M0 16L4 12M16 16L12 12" stroke="#a8c4e0" stroke-width="1.500"/><circle cx="8" cy="8" r="5" fill="#4a4a4a" stroke="#d0d0d0" stroke-width="1.600" stroke-dasharray="2.200 1.700"/><circle cx="8" cy="8" r="2.200" fill="#6fa0d8"/></svg>
<svg style="left:214px;top:78px;" width="16" height="16" viewBox="0 0 16 16"><rect x=".5" y=".5" width="15" height="15" fill="#dbe2ea" stroke="#555" stroke-width="1" stroke-dasharray="2 1.500"/><path d="M2.500 8L8 2.500L13.500 8V14H2.500Z" fill="#1e2228"/></svg>
<svg style="left:255px;top:77px;" width="16" height="16" viewBox="0 0 16 16"><path d="M1 11.5L8 8.5L15 11.5L8 14.5Z" fill="#c9d6e8" stroke="#6f88aa" stroke-width=".7"/><path d="M1 8.5L8 5.5L15 8.5L8 11.5Z" fill="#b7cae3" stroke="#6f88aa" stroke-width=".7"/><path d="M1 5.5L8 2.5L15 5.5L8 8.5Z" fill="#a3bfe3" stroke="#5f7aa8" stroke-width=".7"/></svg>
<svg style="left:578px;top:77px;" width="16" height="16" viewBox="0 0 16 16"><path d="M1 6L8 3L15 6L8 9Z" fill="#c9d6e8" stroke="#6f88aa" stroke-width=".7"/><path d="M1 9L8 6L15 9L8 12Z" fill="#b7cae3" stroke="#6f88aa" stroke-width=".7"/><path d="M1 12L8 9L15 12L8 15Z" fill="#e8d038" stroke="#a89010" stroke-width=".7"/><path d="M1 16L5 12" stroke="#1f3f7a" stroke-width="1.300"/><path d="M5.500 11.500L5 14.500L2.500 12Z" fill="#1f3f7a"/></svg>
<svg style="left:601px;top:77px;" width="16" height="16" viewBox="0 0 16 16"><path d="M1 12L8 9L15 12L8 15Z" fill="#c9d6e8" stroke="#6f88aa" stroke-width=".7"/><path d="M1 9.5L8 6.5L15 9.5L8 12.5Z" fill="#b7cae3" stroke="#6f88aa" stroke-width=".7"/><path d="M1 7L8 4L15 7L8 10Z" fill="#a3bfe3" stroke="#5f7aa8" stroke-width=".7"/><path d="M4 6Q4.500 1.500 9.500 2Q13 3 12.500 7" stroke="#2a5aa0" stroke-width="1.800" fill="none"/><path d="M1.500 4.500L7 5L4 9Z" fill="#2a5aa0"/></svg>
<svg style="left:283px;top:79px;" width="9" height="14" viewBox="0 0 8 13.5"><path d="M4 0.800Q.8 1 .8 4.500Q1 6.500 2.800 8.500V10.500H5.200V8.500Q7 6.500 7.200 4.500Q7.200 1 4 .8Z" fill="#fdfad0" stroke="#b8a020" stroke-width=".9"/><rect x="2.600" y="10.500" width="2.800" height="2.500" fill="#5070c0"/></svg>
<svg style="left:296px;top:79px;" width="14" height="14" viewBox="0 0 14 14"><circle cx="7" cy="7" r="6" fill="#f4e048" stroke="#2f6fc0" stroke-width="1.200"/><path d="M0 0L2 2M14 0L12 2M0 14L2 12M14 14L12 12" stroke="#e8c820" stroke-width="1.500"/></svg>
<svg style="left:312px;top:78px;" width="15" height="15" viewBox="0 0 15 15"><circle cx="5.500" cy="5.500" r="5" fill="#9cbce0" stroke="#6f90c0" stroke-width=".8"/><circle cx="5.500" cy="5.500" r="2.500" fill="none" stroke="#d8c060" stroke-width="1.200"/><rect x="7" y="7" width="7" height="7" fill="#f4f6fa" stroke="#6f88b0" stroke-width="1"/></svg>
<svg style="left:330px;top:78px;" width="14" height="15" viewBox="0 0 14 15"><path d="M2 6V3.500Q2 1 4.500 1Q7 1 7 3.500V5" stroke="#c8b020" stroke-width="1.800" fill="none"/><rect x="5" y="5.500" width="8" height="8.500" rx="1" fill="#e4e070" stroke="#a8a020" stroke-width=".9"/><path d="M7 8H11M7 10H11M7 12H11" stroke="#b0a830" stroke-width=".8"/></svg>
<div style="left:346px;top:81px;width:10px;height:10px;background:#8080ff;border:1px solid #000;"></div>
<svg style="left:4px;top:113px;" width="16" height="16" viewBox="0 0 16 16"><path d="M2.500 14L13.500 3" stroke="#000" stroke-width="1.300"/><rect x="1" y="12.5" width="3" height="3" fill="#1e6fd0"/><rect x="12" y="1.5" width="3" height="3" fill="#1e6fd0"/></svg>
<svg style="left:4px;top:135px;" width="16" height="16" viewBox="0 0 16 16"><path d="M2 14.500L14.500 2" stroke="#000" stroke-width="1.300"/><path d="M.5 16L2 11.500L5 14.500ZM16 .5L11.500 2L14.500 5Z" fill="#000"/><rect x="6.7" y="6.7" width="2.8" height="2.8" fill="#1e6fd0"/></svg>
<svg style="left:4px;top:157px;" width="16" height="16" viewBox="0 0 16 16"><path d="M2 11.500H10.500Q15 11 14.500 7.500Q14 4 10.500 4.500" stroke="#1f4b8f" stroke-width="1.300" fill="none"/><rect x="0.5" y="10" width="3" height="3" fill="#1e6fd0"/><rect x="9" y="10" width="3" height="3" fill="#1e6fd0"/><rect x="9.5" y="3" width="3" height="3" fill="#1e6fd0"/></svg>
<svg style="left:4px;top:179px;" width="16" height="16" viewBox="0 0 16 16"><path d="M8 1.500L15 6.500L12.500 14.500H3.500L1 6.500Z" fill="#dfe8f2" stroke="#1c2c48" stroke-width="1.300"/></svg>
<svg style="left:4px;top:201px;" width="16" height="16" viewBox="0 0 16 16"><rect x="2" y="4" width="12.500" height="8" fill="#dfe8f2" stroke="#000" stroke-width="1.300"/><rect x="0.5" y="10.5" width="3" height="3" fill="#1e6fd0"/><rect x="13" y="2.5" width="3" height="3" fill="#1e6fd0"/></svg>
<svg style="left:4px;top:223px;" width="16" height="16" viewBox="0 0 16 16"><path d="M2 14Q3 4.500 13.500 3" stroke="#1f4b8f" stroke-width="1.400" fill="none"/><rect x="0.5" y="12.5" width="3" height="3" fill="#1e6fd0"/><rect x="12.5" y="1.5" width="3" height="3" fill="#1e6fd0"/><rect x="4.5" y="5" width="3" height="3" fill="#1e6fd0"/></svg>
<svg style="left:4px;top:245px;" width="16" height="16" viewBox="0 0 16 16"><circle cx="8" cy="8" r="6.800" fill="#e4ecf4" stroke="#000" stroke-width="1.400"/><path d="M8 8L12 4" stroke="#1e6fd0" stroke-width="1.300"/><rect x="6.6" y="6.6" width="2.8" height="2.8" fill="#1e6fd0"/></svg>
<svg style="left:4px;top:267px;" width="16" height="16" viewBox="0 0 16 16"><path d="M4 2Q7 0 9 2.500Q13 2 13 5.500Q15.500 8 13.500 10.500Q14 14.500 10 14Q7.500 16 6 13Q2 13.500 2.500 9.500Q-.5 7 2.500 5Q2 2.500 4 2Z" fill="#e4ecf4" stroke="#000" stroke-width="1.300"/></svg>
<svg style="left:4px;top:290px;" width="16" height="16" viewBox="0 0 16 16"><path d="M1.500 14Q4 6 7 8.500T14.500 2.500" stroke="#000" stroke-width="1.300" fill="none"/></svg>
<svg style="left:4px;top:311px;" width="16" height="16" viewBox="0 0 16 16"><ellipse cx="8" cy="8" rx="6.500" ry="4.300" fill="#e4ecf4" stroke="#000" stroke-width="1.400"/><rect x="0" y="6.5" width="3" height="3" fill="#1e6fd0"/><rect x="13" y="6.5" width="3" height="3" fill="#1e6fd0"/><rect x="6.5" y="2.3" width="3" height="3" fill="#1e6fd0"/></svg>
<svg style="left:4px;top:333px;" width="16" height="16" viewBox="0 0 16 16"><path d="M3.500 11.500Q.5 9.500 2.500 7Q6 3.500 11.500 5Q15.500 7 13 10Q11 11.500 8.500 12" stroke="#1f3f7a" stroke-width="1.300" fill="none"/><rect x="2.5" y="10.5" width="3" height="3" fill="#1e6fd0"/><rect x="7" y="11" width="3" height="3" fill="#1e6fd0"/></svg>
<svg style="left:4px;top:355px;" width="16" height="16" viewBox="0 0 16 16"><path d="M5 1.500H12L15 4.500V13H5Z" fill="#e4ecf4" stroke="#8a9ab8" stroke-width=".9"/><rect x="2" y="5" width="8" height="6" fill="#f0e068" stroke="#1f4b8f" stroke-width="1.100"/><circle cx="8.500" cy="11" r="3" fill="#f0e068" stroke="#1f4b8f" stroke-width="1.100"/><rect x=".5" y="9.500" width="3" height="3" fill="#1e6fd0"/><path d="M16 13V16H13Z" fill="#000"/></svg>
<svg style="left:4px;top:378px;" width="16" height="16" viewBox="0 0 16 16"><rect x="3" y="2.500" width="7.500" height="6" fill="#f0e068" stroke="#1f4b8f" stroke-width="1.200"/><circle cx="10" cy="10.500" r="3.500" fill="#f0e068" stroke="#1f4b8f" stroke-width="1.200"/></svg>
<svg style="left:4px;top:400px;" width="16" height="16" viewBox="0 0 16 16"><rect x="7" y="7" width="2.500" height="2.500" fill="#1e6fd0"/></svg>
<svg style="left:4px;top:421px;" width="16" height="16" viewBox="0 0 16 16"><rect x="3" y="3" width="10" height="10" fill="#dfe8f2"/><path d="M4 3L13 12M7 3L13 9M10 3L13 6M3 5L11 13M3 8L8 13M3 11L5 13" stroke="#1f4b8f" stroke-width=".7"/><path d="M3 0V16M13 0V16M0 3H16M0 13H16" stroke="#1f4b8f" stroke-width="1.300"/><path d="M1 15L15 1" stroke="#1f4b8f" stroke-width=".8"/></svg>
<svg style="left:4px;top:443px;" width="16" height="16" viewBox="0 0 16 16"><defs><linearGradient id="gf" x1="0" y1="0" x2="1" y2="1"><stop offset="0" stop-color="#1c2850"/><stop offset="1" stop-color="#b8b060"/></linearGradient></defs><rect x="3" y="3" width="10" height="10" fill="url(#gf)"/><path d="M3 0V16M13 0V16M0 3H16M0 13H16" stroke="#000" stroke-width="1.500"/></svg>
<svg style="left:4px;top:465px;" width="16" height="16" viewBox="0 0 16 16"><path d="M1 3.500H10.500L15.500 8.500V14.500H1Z" fill="#b9cfe8" stroke="#1f4b8f" stroke-width="1.300"/><circle cx="7.500" cy="9" r="3" fill="#f4f7fb" stroke="#50607a" stroke-width="1"/></svg>
<svg style="left:4px;top:487px;" width="16" height="16" viewBox="0 0 16 16"><rect x="1.500" y="2.500" width="13" height="11.500" fill="#f4f7fc" stroke="#5577c8" stroke-width="1"/><rect x="1.500" y="2.500" width="13" height="3" fill="#5577c8"/><path d="M1.500 8.500H14.500M1.500 11.300H14.500M5.800 5.500V14M10.200 5.500V14" stroke="#5577c8" stroke-width="1"/></svg>
<svg style="left:4px;top:509px;" width="16" height="16" viewBox="0 0 16 16"><path d="M2 15L8 1.500L14 15M4.500 10.500H11.500" stroke="#000" stroke-width="1.500" fill="none"/></svg>
<svg style="left:1345px;top:113px;" width="16" height="16" viewBox="0 0 16 16"><path d="M0 14.500H15" stroke="#000" stroke-width="1"/><path d="M3.500 11L12.500 1L15.500 3.500L7 14Z" fill="#f0c828" stroke="#1f3f8f" stroke-width=".8"/><path d="M3.500 11L7 7L10.200 9.800L7 14Z" fill="#f4f8fa"/><path d="M5.800 8.300L9 11.200" stroke="#38b0a8" stroke-width="1.200"/><path d="M3.500 11L5.300 9L8.500 12L7 14Q4 15 3.500 11Z" fill="#e04848" stroke="#902020" stroke-width=".5"/></svg>
<svg style="left:1345px;top:135px;" width="16" height="16" viewBox="0 0 16 16"><circle cx="4.500" cy="5" r="3" fill="none" stroke="#000" stroke-width="1.300"/><circle cx="9.500" cy="11" r="3.200" fill="#e4ecf4" stroke="#000" stroke-width="1.300"/><circle cx="7.500" cy="8.500" r="2.500" fill="none" stroke="#000" stroke-width="1.100"/><path d="M7 2.500Q11.500 1.500 12.500 5.500" stroke="#1f4b8f" stroke-width="1.500" fill="none"/><path d="M10.500 5H15L12.800 8Z" fill="#1f4b8f"/></svg>
<svg style="left:1345px;top:157px;" width="16" height="16" viewBox="0 0 16 16"><path d="M8 0V16" stroke="#1e6fd0" stroke-width="1.200"/><path d="M6 3V13H1Z" fill="#e4ecf4" stroke="#000" stroke-width="1.200"/><path d="M10 3V13H15Z" fill="#e4ecf4" stroke="#000" stroke-width="1.200"/></svg>
<svg style="left:1345px;top:179px;" width="16" height="16" viewBox="0 0 16 16"><path d="M1 14.500V11H4.500Q3 9.500 3 7Q3.500 2 8 2Q12.500 2 13 7Q13 9.500 11.500 11H15V14.500Z" fill="#e4ecf4" stroke="#000" stroke-width="1.300"/><path d="M3.500 12.500H7.200Q5.500 10 6.200 8Q6.800 6 8 6Q9.200 6 9.800 8Q10.500 10 8.800 12.500H12.500" stroke="#1e5fc0" stroke-width="1.100" fill="none"/></svg>
<svg style="left:1345px;top:201px;" width="16" height="16" viewBox="0 0 16 16"><rect x="1.2" y="1.2" width="5.500" height="5.500" fill="#f4f7fb" stroke="#000" stroke-width="1.300"/><rect x="1.2" y="9.3" width="5.500" height="5.500" fill="#f4f7fb" stroke="#000" stroke-width="1.300"/><rect x="9.3" y="1.2" width="5.500" height="5.500" fill="#f4f7fb" stroke="#000" stroke-width="1.300"/><rect x="9.3" y="9.3" width="5.500" height="5.500" fill="#f4f7fb" stroke="#000" stroke-width="1.300"/></svg>
<svg style="left:1345px;top:223px;" width="16" height="16" viewBox="0 0 16 16"><path d="M8 1.500V14.500M1.500 8H14.500" stroke="#24508f" stroke-width="1.600"/><path d="M8 0L11 3.500H5ZM8 16L11 12.500H5ZM0 8L3.500 5V11ZM16 8L12.500 5V11Z" fill="#24508f"/></svg>
<svg style="left:1345px;top:245px;" width="16" height="16" viewBox="0 0 16 16"><path d="M11.500 3.500A6 6 0 1 1 4.500 3.500" stroke="#1f4b8f" stroke-width="1.900" fill="none"/><path d="M2.500 0L8 2.500L3 6.500Z" fill="#1f4b8f"/></svg>
<svg style="left:1345px;top:267px;" width="16" height="16" viewBox="0 0 16 16"><rect x="1" y="1" width="14" height="14" fill="#e4ecf4" stroke="#3a62a8" stroke-width="1"/><rect x="1.500" y="8" width="6.500" height="6.500" fill="#e4ecf4" stroke="#000" stroke-width="1.100" stroke-dasharray="1.200 1"/></svg>
<svg style="left:1345px;top:289px;" width="16" height="16" viewBox="0 0 16 16"><path d="M1.500 1.500V14.500H6.500V1.500Z" fill="#e4ecf4" stroke="#000" stroke-width="1.300"/><path d="M6.500 1.500L15 14.500H6.500" fill="#c9daf0" stroke="#3a62a8" stroke-width="1"/><path d="M6.500 1.500V14.500" stroke="#000" stroke-dasharray="1.500 1.200" stroke-width="1"/></svg>
<svg style="left:1345px;top:311px;" width="16" height="16" viewBox="0 0 16 16"><path d="M1 8H7" stroke="#000" stroke-width="1.300"/><path d="M8 8H16" stroke="#1e6fd0" stroke-width="1.200" stroke-dasharray="1.800 1.200"/><path d="M5 14L10 2.500" stroke="#1e6fd0" stroke-width="1.300"/></svg>
<svg style="left:1345px;top:333px;" width="16" height="16" viewBox="0 0 16 16"><path d="M1 9.500H9" stroke="#000" stroke-width="1.300" stroke-dasharray="2 1.300"/><path d="M9 9.500H11.500" stroke="#1e6fd0" stroke-width="1.200"/><path d="M10.500 14.500L15.500 3" stroke="#1e6fd0" stroke-width="1.400"/></svg>
<svg style="left:1345px;top:355px;" width="16" height="16" viewBox="0 0 16 16"><rect x="1.500" y="4" width="13" height="10" fill="#e4ecf4" stroke="#000" stroke-width="1.300"/><rect x="6.5" y="2.5" width="3" height="3" fill="#1e6fd0"/></svg>
<svg style="left:1345px;top:377px;" width="16" height="16" viewBox="0 0 16 16"><path d="M5.500 3.500H1.500V14H14.500V3.500H10.500" fill="#e4ecf4" stroke="#000" stroke-width="1.300"/><rect x="4.5" y="2" width="3" height="3" fill="#1e6fd0"/><rect x="9" y="2" width="3" height="3" fill="#1e6fd0"/></svg>
<svg style="left:1345px;top:399px;" width="16" height="16" viewBox="0 0 16 16"><path d="M0 8H16" stroke="#000" stroke-width="1.300"/><path d="M4 5L8 8L4 11ZM12 5L8 8L12 11Z" fill="#000"/></svg>
<svg style="left:1345px;top:421px;" width="16" height="16" viewBox="0 0 16 16"><path d="M1.500 15V6L7 1.500H15" stroke="#1f4b8f" stroke-width="0" fill="none"/><path d="M2 1.500H15" stroke="#000" stroke-width="1" stroke-dasharray="1.200 1.200"/><path d="M2 1.500V6" stroke="#000" stroke-dasharray="1.200 1.200"/><path d="M2 15V7.500L8.500 1.500" stroke="#1e6fd0" stroke-width="1.300" fill="none"/><path d="M8.500 1.500H15" stroke="#000" stroke-width="1.300"/></svg>
<svg style="left:1345px;top:443px;" width="16" height="16" viewBox="0 0 16 16"><path d="M2 1.500H9M2 1.500V8" stroke="#000" stroke-dasharray="1.200 1.200"/><path d="M2 15.500V9.500Q2.500 2 10 1.500" stroke="#1e6fd0" stroke-width="1.400" fill="none"/><path d="M10 1.500H15.500" stroke="#000" stroke-width="1.300"/></svg>
<svg style="left:1345px;top:465px;" width="16" height="16" viewBox="0 0 16 16"><path d="M2 14L6 8L2.500 6.500L7.500 5.500L8 1L10 5L14 3L11.500 7L15 9L10.500 9.500L10 14L7.500 10.500Z" fill="#e82818" stroke="#a01008" stroke-width=".5"/><path d="M5 12L9 7" stroke="#f8d020" stroke-width="1.800"/><path d="M11 1L12 3M14.500 1.500L13 3.500M15 6L13 6" stroke="#555" stroke-width=".8"/></svg>
<svg style="left:1345px;top:504px;" width="16" height="16" viewBox="0 0 16 16"><rect x="1.5" y="1.5" width="9" height="8.500" fill="#3a6fb8" stroke="#2a5a9f" stroke-width="1"/><rect x="5.5" y="5.5" width="9" height="8.500" fill="#c9daee" stroke="#2a5a9f" stroke-width="1"/></svg>
<svg style="left:1345px;top:526px;" width="16" height="16" viewBox="0 0 16 16"><rect x="1.5" y="1.5" width="9" height="8.500" fill="#c9daee" stroke="#2a5a9f" stroke-width="1"/><rect x="5.5" y="5.5" width="9" height="8.500" fill="#3a6fb8" stroke="#2a5a9f" stroke-width="1"/><rect x="9" y="9.500" width="6" height="5" fill="#dfe8f4" stroke="#2a5a9f" stroke-width=".8"/></svg>
<svg style="left:1345px;top:548px;" width="16" height="16" viewBox="0 0 16 16"><rect x="1.5" y="1.5" width="9" height="8.500" fill="#3a6fb8" stroke="#2a5a9f" stroke-width="1"/><rect x="5.5" y="5.5" width="9" height="8.500" fill="#3a6fb8" stroke="#2a5a9f" stroke-width="1"/></svg>
<svg style="left:1345px;top:571px;" width="16" height="16" viewBox="0 0 16 16"><rect x="1.5" y="1.5" width="9" height="8.500" fill="#3a6fb8" stroke="#2a5a9f" stroke-width="1"/><rect x="5.5" y="5.5" width="9" height="8.500" fill="#c9daee" stroke="#2a5a9f" stroke-width="1"/><rect x="1.500" y="1.500" width="9" height="3" fill="#2a5a9f"/></svg><svg style="left:28px;top:101px" width="1309" height="524" viewBox="28 101 1309 524"><g shape-rendering="crispEdges"><polyline points="500.0,335.0 504.8,334.2 511.2,333.0 519.0,331.6 527.5,330.1 536.3,328.6 545.0,327.1 553.0,325.7 560.0,324.6 565.8,323.7 570.9,323.0 575.6,322.4 580.0,321.9 584.4,321.4 589.1,320.8 594.2,320.2 600.0,319.4 606.5,318.5 613.6,317.5 621.0,316.4 628.8,315.2 636.6,314.1 644.5,312.9 652.4,311.7 660.0,310.6 666.8,309.6 672.7,308.9 678.1,308.2 683.8,307.4 690.2,306.5 698.0,305.4 707.7,303.9 720.0,301.9 735.9,299.3 755.3,296.0 777.1,292.3 800.0,288.4 822.9,284.5 844.7,280.7 864.1,277.3 880.0,274.5 892.3,272.3 901.9,270.4 909.6,268.9 915.9,267.6 921.5,266.4 927.0,265.3 932.9,264.0 940.0,262.7 948.1,261.3 956.5,259.8 965.2,258.4 973.9,257.0 982.4,255.6 990.5,254.2 998.1,252.8 1005.0,251.3 1011.3,249.7 1017.2,248.0 1022.8,246.2 1028.0,244.4 1032.6,242.8 1036.6,241.2 1040.1,240.0 1042.8,239.0" fill="none" stroke="#8080ff" stroke-width="1" /><polyline points="431.8,364.0 441.6,362.9 454.6,361.4 470.0,359.7 487.2,357.8 505.4,355.7 524.1,353.5 542.5,351.2 560.0,349.0 576.5,346.8 592.8,344.5 609.0,342.2 625.5,339.8 642.6,337.3 660.5,334.7 679.5,331.9 700.0,329.0 723.2,325.7 749.5,322.0 777.6,318.1 806.2,314.1 834.1,310.1 859.8,306.5 882.2,303.2 900.0,300.6 912.4,298.7 920.4,297.4 925.1,296.5 927.7,295.9 929.3,295.3 931.1,294.7 934.3,293.9 940.0,292.6 948.2,290.9 958.0,289.0 968.6,286.9 979.7,284.6 990.6,282.4 1000.9,280.1 1009.9,277.9 1017.3,275.9 1023.0,273.9 1027.5,271.9 1031.2,269.8 1034.0,267.8 1036.2,265.9 1038.0,264.3 1039.5,262.9 1041.0,261.8" fill="none" stroke="#8080ff" stroke-width="1" /><polyline points="291.0,413.0 295.4,412.4 300.3,411.6 306.1,410.8 313.0,409.8 321.5,408.5 331.9,407.0 344.6,405.1 360.0,402.8 379.1,399.9 402.2,396.4 428.0,392.5 455.6,388.3 483.6,384.0 511.1,379.9 537.0,376.0 560.0,372.5 580.5,369.4 599.7,366.5 617.8,363.8 635.0,361.2 651.6,358.8 667.8,356.4 683.9,354.1 700.0,351.9 716.2,349.8 732.3,347.7 748.2,345.8 763.8,344.0 778.8,342.2 793.3,340.5 807.1,338.7 820.0,336.9 832.2,335.0 843.8,333.1 854.7,331.2 865.0,329.3 874.7,327.5 883.8,325.8 892.2,324.2 900.0,322.8 906.9,321.6 912.8,320.6 917.9,319.8 922.5,319.0 926.8,318.3 930.9,317.6 935.3,316.9 940.0,316.0 945.1,315.0 950.2,314.0 955.4,313.0 960.6,311.9 965.7,310.9 970.7,309.8 975.5,308.7 980.0,307.6 984.3,306.5 988.5,305.4 992.5,304.2 996.3,303.1 1000.0,301.9 1003.6,300.8 1007.0,299.7 1010.3,298.7 1013.5,297.7 1016.7,296.7 1019.8,295.6 1022.7,294.6 1025.4,293.7 1027.8,292.9 1029.8,292.2 1031.4,291.7" fill="none" stroke="#8080ff" stroke-width="1" /><polyline points="376.0,417.6 390.4,416.0 409.6,413.9 432.6,411.3 458.0,408.5 484.7,405.5 511.4,402.5 536.9,399.5 560.0,396.6 581.6,393.8 603.1,390.8 624.4,387.8 645.2,384.8 665.4,381.9 684.8,379.0 703.0,376.3 720.0,373.8 735.5,371.5 749.7,369.5 762.8,367.5 775.0,365.7 786.6,363.9 797.8,362.2 808.9,360.4 820.0,358.6 831.2,356.7 842.3,354.8 853.2,352.8 863.8,350.9 873.8,349.0 883.3,347.2 892.1,345.5 900.0,344.0 906.9,342.6 912.8,341.4 917.9,340.3 922.5,339.3 926.8,338.3 930.9,337.4 935.3,336.5 940.0,335.5 945.2,334.5 950.5,333.5 956.0,332.5 961.4,331.6 966.6,330.6 971.5,329.7 976.1,328.8 980.0,328.0 983.3,327.2 986.0,326.5 988.3,325.8 990.3,325.2 992.1,324.5 993.9,323.9 995.8,323.2 998.0,322.4 1000.5,321.5 1003.2,320.6 1006.0,319.6 1008.8,318.5 1011.4,317.6 1013.8,316.7 1015.8,315.9 1017.3,315.4" fill="none" stroke="#8080ff" stroke-width="1" /><polyline points="1006.8,261.0 1008.2,260.4 1010.1,259.7 1012.3,258.8 1014.7,257.8 1017.3,256.8 1020.0,255.7 1022.6,254.6 1025.0,253.5 1027.4,252.4 1030.1,251.1 1032.8,249.8 1035.4,248.4 1038.0,247.2 1040.2,246.0 1042.2,245.0 1043.6,244.3" fill="none" stroke="#8080ff" stroke-width="1" /><polyline points="176.0,351.0 176.7,350.8 177.7,350.5 178.8,350.2 180.1,349.8 181.5,349.4 183.0,349.1 184.5,348.8 186.0,348.5 187.6,348.3 189.2,348.1 191.0,347.9 192.8,347.8 194.6,347.6 196.4,347.5 198.2,347.5 200.0,347.5 201.8,347.6 203.8,347.7 205.8,347.8 207.8,348.0 209.6,348.3 211.3,348.5 212.8,348.7 214.0,349.0 214.9,349.3 215.6,349.6 216.2,349.9 216.6,350.2 216.7,350.6 216.7,350.9 216.5,351.2 216.0,351.5 215.3,351.8 214.3,352.1 213.1,352.4 211.7,352.7 210.1,352.9 208.5,353.2 206.8,353.3 205.0,353.5 203.1,353.6 201.1,353.7 198.8,353.8 196.6,353.8 194.3,353.8 192.0,353.7 189.9,353.6 188.0,353.5 186.2,353.3 184.4,353.0 182.6,352.6 180.9,352.2 179.4,351.9 178.0,351.5 176.9,351.2 176.0,351.0" fill="none" stroke="#8080ff" stroke-width="1" /><polyline points="190.0,350.0 191.9,350.2 194.3,350.4 197.1,350.7 200.3,351.1 203.8,351.4 207.5,351.8 211.2,352.1 215.0,352.5 218.8,352.9 222.8,353.3 226.9,353.8 231.1,354.2 235.6,354.6 240.2,355.0 245.0,355.3 250.0,355.5 255.6,355.6 262.0,355.5 268.8,355.4 275.7,355.2 282.3,355.0 288.3,354.8 293.3,354.6 297.0,354.5" fill="none" stroke="#8080ff" stroke-width="1" /><polyline points="196.0,352.5 198.6,352.7 202.0,353.0 206.0,353.3 210.5,353.7 215.3,354.0 220.3,354.4 225.2,354.7 230.0,355.0 234.8,355.3 239.9,355.5 245.1,355.7 250.4,356.0 255.6,356.2 260.7,356.3 265.5,356.4 270.0,356.5 274.3,356.5 278.5,356.4 282.6,356.3 286.5,356.1 290.1,355.9 293.2,355.7 295.9,355.6 298.0,355.5" fill="none" stroke="#8080ff" stroke-width="1" /><polyline points="205.0,349.5 250.0,353.5 296.0,353.0" fill="none" stroke="#8080ff" stroke-width="1" /><polyline points="176.0,389.5 176.7,389.3 177.6,389.0 178.7,388.7 179.9,388.3 181.2,388.0 182.7,387.6 184.3,387.3 186.0,387.0 187.9,386.7 189.9,386.5 192.2,386.2 194.5,386.0 196.9,385.8 199.3,385.6 201.7,385.5 204.0,385.5 206.3,385.5 208.8,385.6 211.4,385.8 213.9,386.0 216.3,386.2 218.5,386.4 220.4,386.7 222.0,387.0 223.3,387.3 224.5,387.7 225.4,388.1 226.1,388.5 226.6,388.9 226.7,389.3 226.6,389.7 226.0,390.0 225.0,390.3 223.5,390.6 221.6,390.9 219.5,391.2 217.2,391.4 214.8,391.7 212.3,391.9 210.0,392.0 207.7,392.1 205.1,392.2 202.5,392.3 199.9,392.3 197.2,392.3 194.7,392.2 192.2,392.1 190.0,392.0 187.9,391.8 185.8,391.5 183.7,391.1 181.8,390.8 180.0,390.4 178.4,390.0 177.0,389.7 176.0,389.5" fill="none" stroke="#8080ff" stroke-width="1" /><polyline points="188.0,389.0 190.0,389.2 192.7,389.3 195.8,389.6 199.3,389.8 203.1,390.1 207.1,390.4 211.1,390.7 215.0,391.0 218.9,391.3 222.9,391.7 226.9,392.1 231.1,392.4 235.5,392.8 240.1,393.1 244.9,393.4 250.0,393.5 255.8,393.5 262.4,393.5 269.5,393.3 276.7,393.2 283.6,393.0 289.9,392.8 295.1,392.6 299.0,392.5" fill="none" stroke="#8080ff" stroke-width="1" /><polyline points="196.0,391.5 198.6,391.7 202.0,392.0 206.0,392.3 210.5,392.7 215.3,393.1 220.3,393.4 225.2,393.7 230.0,394.0 234.8,394.2 239.8,394.4 245.0,394.6 250.2,394.8 255.5,394.9 260.6,395.0 265.4,395.0 270.0,395.0 274.4,394.9 278.9,394.8 283.3,394.6 287.5,394.3 291.4,394.1 294.8,393.8 297.8,393.6 300.0,393.5" fill="none" stroke="#8080ff" stroke-width="1" /><polyline points="205.0,387.5 245.0,391.0 298.0,391.5" fill="none" stroke="#8080ff" stroke-width="1" /><polyline points="186.0,350.5 230.0,353.5 262.0,355.0" fill="none" stroke="#8080ff" stroke-width="1" /><polyline points="200.0,351.5 240.0,354.5 285.0,355.5" fill="none" stroke="#8080ff" stroke-width="1" /><polyline points="192.0,349.0 225.0,351.5 255.0,353.5" fill="none" stroke="#8080ff" stroke-width="1" /><polyline points="186.0,389.0 230.0,392.0 262.0,393.5" fill="none" stroke="#8080ff" stroke-width="1" /><polyline points="200.0,390.0 240.0,393.0 285.0,393.5" fill="none" stroke="#8080ff" stroke-width="1" /><polyline points="192.0,387.5 225.0,390.0 255.0,392.0" fill="none" stroke="#8080ff" stroke-width="1" /><polyline points="241.8,445.7 245.1,444.7 249.6,443.3 255.0,441.7 260.9,439.9 266.8,438.2 272.5,436.6 278.0,435.2 283.7,433.8 289.5,432.4 295.3,431.0 301.1,429.8 306.7,428.6 312.2,427.5 317.5,426.5 322.8,425.6 328.1,424.8 333.3,423.9 338.6,423.0 342.0,422.4 343.2,422.0 344.4,421.7 347.8,421.1 355.6,419.8 370.0,417.6 393.1,414.1 423.4,409.5 458.2,404.3 494.5,398.9 529.4,393.7 560.0,389.2 587.6,385.1 614.8,381.2 640.6,377.4 664.1,374.1 684.2,371.2 700.0,369.0 708.4,367.9 709.6,367.9 707.5,368.3 705.9,368.8 708.8,368.7 720.0,367.4 742.1,364.7 772.6,360.8 807.5,356.4 843.0,352.0 875.1,348.0 900.0,345.0 916.9,343.1 928.9,342.0 937.5,341.3 944.4,340.8 951.4,340.3 960.0,339.5 970.7,338.4 982.2,337.2 993.8,335.9 1004.4,334.7 1013.5,333.7 1020.0,333.0" fill="none" stroke="#00ff00" stroke-width="1" /><polyline points="241.8,445.7 248.0,445.2 256.5,444.5 266.5,443.7 277.6,442.8 288.9,441.9 300.0,441.0 309.6,440.4 318.0,440.0 326.8,439.6 337.3,439.0 351.3,437.7 370.0,435.6 395.3,432.4 426.3,428.2 460.6,423.4 495.9,418.4 529.8,413.7 560.0,409.5 585.5,406.1 608.1,403.2 629.4,400.5 650.7,397.7 673.8,394.5 700.0,390.6 731.6,385.6 767.9,379.7 805.8,373.4 842.4,367.3 874.8,361.8 900.0,357.6 916.5,354.9 926.4,353.4 932.0,352.6 935.9,352.1 940.4,351.2 948.0,349.7 959.4,347.2 972.9,344.2 987.0,340.9 1000.4,337.7 1011.9,334.9 1020.0,333.0" fill="none" stroke="#00ff00" stroke-width="1" /><polyline points="255.0,444.5 300.0,437.0 340.0,431.5" fill="none" stroke="#00ff00" stroke-width="1" /><polyline points="304.0,432.4 345.0,432.8" fill="none" stroke="#00ff00" stroke-width="1" /><polyline points="304.0,437.3 345.0,426.3" fill="none" stroke="#00ff00" stroke-width="1" /><polyline points="345.0,426.3 388.0,427.7" fill="none" stroke="#00ff00" stroke-width="1" /><polyline points="345.0,432.8 388.0,420.0" fill="none" stroke="#00ff00" stroke-width="1" /><polyline points="388.0,420.0 430.0,421.7" fill="none" stroke="#00ff00" stroke-width="1" /><polyline points="388.0,427.7 430.0,413.9" fill="none" stroke="#00ff00" stroke-width="1" /><polyline points="430.0,413.9 473.0,415.7" fill="none" stroke="#00ff00" stroke-width="1" /><polyline points="430.0,421.7 473.0,407.6" fill="none" stroke="#00ff00" stroke-width="1" /><polyline points="473.0,407.6 516.0,409.6" fill="none" stroke="#00ff00" stroke-width="1" /><polyline points="473.0,415.7 516.0,401.3" fill="none" stroke="#00ff00" stroke-width="1" /><polyline points="516.0,401.3 559.0,403.6" fill="none" stroke="#00ff00" stroke-width="1" /><polyline points="516.0,409.6 559.0,395.0" fill="none" stroke="#00ff00" stroke-width="1" /><polyline points="559.0,395.0 602.0,397.6" fill="none" stroke="#00ff00" stroke-width="1" /><polyline points="559.0,403.6 602.0,388.9" fill="none" stroke="#00ff00" stroke-width="1" /><polyline points="602.0,388.9 645.0,391.7" fill="none" stroke="#00ff00" stroke-width="1" /><polyline points="602.0,397.6 645.0,382.8" fill="none" stroke="#00ff00" stroke-width="1" /><polyline points="645.0,382.8 689.0,385.6" fill="none" stroke="#00ff00" stroke-width="1" /><polyline points="645.0,391.7 689.0,376.6" fill="none" stroke="#00ff00" stroke-width="1" /><polyline points="689.0,376.6 733.0,379.3" fill="none" stroke="#00ff00" stroke-width="1" /><polyline points="689.0,385.6 733.0,371.2" fill="none" stroke="#00ff00" stroke-width="1" /><polyline points="733.0,371.2 777.0,372.6" fill="none" stroke="#00ff00" stroke-width="1" /><polyline points="733.0,379.3 777.0,365.2" fill="none" stroke="#00ff00" stroke-width="1" /><polyline points="777.0,365.2 821.0,365.9" fill="none" stroke="#00ff00" stroke-width="1" /><polyline points="777.0,372.6 821.0,359.3" fill="none" stroke="#00ff00" stroke-width="1" /><polyline points="821.0,359.3 865.0,359.2" fill="none" stroke="#00ff00" stroke-width="1" /><polyline points="821.0,365.9 865.0,353.3" fill="none" stroke="#00ff00" stroke-width="1" /><polyline points="865.0,353.3 909.0,352.5" fill="none" stroke="#00ff00" stroke-width="1" /><polyline points="865.0,359.2 909.0,347.5" fill="none" stroke="#00ff00" stroke-width="1" /><polyline points="909.0,347.5 953.0,346.0" fill="none" stroke="#00ff00" stroke-width="1" /><polyline points="909.0,352.5 953.0,342.5" fill="none" stroke="#00ff00" stroke-width="1" /><polyline points="205.3,347.2 217.3,346.0 229.3,344.9 241.3,343.7 253.3,342.5 265.3,341.3 277.3,340.1 289.3,338.8 301.3,337.5 313.3,336.3 325.3,335.0 337.3,333.6 349.3,332.3 361.3,331.0 373.3,329.6 385.3,328.2 397.3,326.8 409.3,325.4 421.3,323.9 433.3,322.5 445.3,321.0 457.3,319.5 469.3,318.0 481.3,316.5 493.3,314.9 505.3,313.4 517.3,311.8 529.3,310.2 541.3,308.6 553.3,307.0 565.3,305.3 577.3,303.7 589.3,302.0 601.3,300.3 613.3,298.6 625.3,296.8 637.3,295.1 649.3,293.3 661.3,291.6 673.3,289.8 685.3,287.9 697.3,286.1 709.3,284.3 721.3,282.4 733.3,280.5 745.3,278.6 757.3,276.7 769.3,274.7 781.3,272.8 793.3,270.8 805.3,268.8 817.3,266.8 829.3,264.8 841.3,262.8 853.3,260.7 865.3,258.6 877.3,256.5 889.3,254.4 901.3,252.3 913.3,250.2 925.3,248.0 925.6,247.9" fill="none" stroke="#0000ff" stroke-width="2" /><polyline points="293.0,354.3 305.0,353.1 317.0,351.9 329.0,350.7 341.0,349.6 353.0,348.4 365.0,347.2 377.0,346.0 389.0,344.8 401.0,343.5 413.0,342.3 425.0,341.1 437.0,339.8 449.0,338.6 461.0,337.3 473.0,336.0 485.0,334.7 497.0,333.4 509.0,332.0 521.0,330.7 533.0,329.3 545.0,327.9 557.0,326.5 569.0,325.1 581.0,323.6 593.0,322.2 605.0,320.7 617.0,319.2 629.0,317.6 641.0,316.1 653.0,314.5 665.0,312.8 677.0,311.2 689.0,309.5 701.0,307.8 713.0,306.1 725.0,304.3 737.0,302.6 749.0,300.7 761.0,298.9 773.0,297.0 785.0,295.1 797.0,293.1 809.0,291.1 821.0,289.1 833.0,287.0 845.0,284.9 857.0,282.8 869.0,280.6 881.0,278.4 893.0,276.1 905.0,273.8 917.0,271.4 929.0,269.0 941.0,266.6 953.0,264.1 965.0,261.6 977.0,259.0 989.0,256.4 1001.0,253.7 1004.1,253.0" fill="none" stroke="#0000ff" stroke-width="1" /><polyline points="293.0,356.3 305.0,355.1 317.0,353.9 329.0,352.7 341.0,351.6 353.0,350.4 365.0,349.2 377.0,348.0 389.0,346.8 401.0,345.5 413.0,344.3 425.0,343.1 437.0,341.8 449.0,340.6 461.0,339.3 473.0,338.0 485.0,336.7 497.0,335.4 509.0,334.0 521.0,332.7 533.0,331.3 545.0,329.9 557.0,328.5 569.0,327.1 581.0,325.6 593.0,324.2 605.0,322.7 617.0,321.2 629.0,319.6 641.0,318.1 653.0,316.5 665.0,314.8 677.0,313.2 689.0,311.5 701.0,309.8 713.0,308.1 725.0,306.3 737.0,304.6 749.0,302.7 761.0,300.9 773.0,299.0 785.0,297.1 797.0,295.1 809.0,293.1 821.0,291.1 833.0,289.0 845.0,286.9 857.0,284.8 869.0,282.6 881.0,280.4 893.0,278.1 905.0,275.8 917.0,273.4 929.0,271.0 941.0,268.6 953.0,266.1 965.0,263.6 977.0,261.0 989.0,258.4 1001.0,255.7 1004.1,255.0" fill="none" stroke="#0000ff" stroke-width="1" /><polyline points="293.0,355.3 305.0,354.1 317.0,352.9 329.0,351.7 341.0,350.6 353.0,349.4 365.0,348.2 377.0,347.0 389.0,345.8 401.0,344.5 413.0,343.3 425.0,342.1 437.0,340.8 449.0,339.6 461.0,338.3 473.0,337.0 485.0,335.7 497.0,334.4 509.0,333.0 521.0,331.7 533.0,330.3 545.0,328.9 557.0,327.5 569.0,326.1 581.0,324.6 593.0,323.2 605.0,321.7 617.0,320.2 620.0,319.8" fill="none" stroke="#0000ff" stroke-width="1" /><polyline points="361.3,331.0 362.3,351.0 364.9,398.2 372.8,415.3 380.8,416.5" fill="none" stroke="#ff7f00" stroke-width="1" /><polyline points="368.3,332.2 369.3,352.0 371.3,398.2 376.3,408.5 380.8,409.6" fill="none" stroke="#ff7f00" stroke-width="1" /><polyline points="391.1,347.1 391.1,381.2 388.3,406.0 385.3,417.6 379.0,433.6" fill="none" stroke="#ff7f00" stroke-width="1" /><polyline points="383.8,348.1 385.3,378.9 383.3,401.0 381.9,408.6 374.0,431.3" fill="none" stroke="#ff7f00" stroke-width="1" /><polyline points="383.8,348.1 391.1,347.1" fill="none" stroke="#ff7f00" stroke-width="1" /><polyline points="380.8,409.6 389.9,409.6 389.9,416.5 380.8,416.5 380.8,409.6" fill="none" stroke="#ff7f00" stroke-width="1" /><polyline points="385.8,411.6 385.8,415.5 388.8,415.5" fill="none" stroke="#ff7f00" stroke-width="1" /><polyline points="361.3,426.6 374.0,426.6 374.0,433.6 361.3,433.6 361.3,426.6" fill="none" stroke="#ff7f00" stroke-width="1" /><polyline points="366.3,428.6 366.3,432.6 369.3,432.6" fill="none" stroke="#ff7f00" stroke-width="1" /><polyline points="402.0,326.2 403.0,346.2 405.6,393.4 413.5,410.5 421.5,411.7" fill="none" stroke="#ff7f00" stroke-width="1" /><polyline points="409.0,327.4 410.0,347.2 412.0,393.4 417.0,403.7 421.5,404.8" fill="none" stroke="#ff7f00" stroke-width="1" /><polyline points="431.8,342.3 431.8,376.4 429.0,401.2 426.0,412.8 419.7,428.8" fill="none" stroke="#ff7f00" stroke-width="1" /><polyline points="424.5,343.3 426.0,374.1 424.0,396.2 422.6,403.8 414.7,426.5" fill="none" stroke="#ff7f00" stroke-width="1" /><polyline points="424.5,343.3 431.8,342.3" fill="none" stroke="#ff7f00" stroke-width="1" /><polyline points="421.5,404.8 430.6,404.8 430.6,411.7 421.5,411.7 421.5,404.8" fill="none" stroke="#ff7f00" stroke-width="1" /><polyline points="426.5,406.8 426.5,410.7 429.5,410.7" fill="none" stroke="#ff7f00" stroke-width="1" /><polyline points="402.0,421.8 414.7,421.8 414.7,428.8 402.0,428.8 402.0,421.8" fill="none" stroke="#ff7f00" stroke-width="1" /><polyline points="407.0,423.8 407.0,427.8 410.0,427.8" fill="none" stroke="#ff7f00" stroke-width="1" /><polyline points="445.0,321.0 445.0,340.7 447.2,387.7 455.3,404.9 463.0,405.8" fill="none" stroke="#ff7f00" stroke-width="1" /><polyline points="451.9,321.9 451.6,342.0 453.4,387.2 458.6,398.0 463.2,399.2" fill="none" stroke="#ff7f00" stroke-width="1" /><polyline points="473.6,337.8 474.3,368.5 471.7,397.8 468.2,410.0 462.8,423.4" fill="none" stroke="#ff7f00" stroke-width="1" /><polyline points="466.5,338.7 468.5,366.7 466.7,393.3 464.8,401.7 457.7,420.4" fill="none" stroke="#ff7f00" stroke-width="1" /><polyline points="466.5,338.7 473.6,337.8" fill="none" stroke="#ff7f00" stroke-width="1" /><polyline points="462.9,399.1 472.4,399.1 472.4,406.0 462.9,406.0 462.9,399.1" fill="none" stroke="#ff7f00" stroke-width="1" /><polyline points="467.9,401.1 467.9,405.0 470.9,405.0" fill="none" stroke="#ff7f00" stroke-width="1" /><polyline points="445.2,416.1 457.7,416.1 457.7,423.2 445.2,423.2 445.2,416.1" fill="none" stroke="#ff7f00" stroke-width="1" /><polyline points="450.2,418.1 450.2,422.2 453.2,422.2" fill="none" stroke="#ff7f00" stroke-width="1" /><polyline points="487.6,315.7 486.6,335.0 488.3,381.9 496.7,399.1 504.0,399.8" fill="none" stroke="#ff7f00" stroke-width="1" /><polyline points="494.4,316.3 492.8,336.7 494.3,380.8 499.9,392.1 504.4,393.5" fill="none" stroke="#ff7f00" stroke-width="1" /><polyline points="514.9,333.0 516.4,360.4 514.0,394.2 510.0,407.0 505.5,417.7" fill="none" stroke="#ff7f00" stroke-width="1" /><polyline points="508.0,334.0 510.5,359.0 509.0,390.1 506.5,399.4 500.3,414.1" fill="none" stroke="#ff7f00" stroke-width="1" /><polyline points="508.0,334.0 514.9,333.0" fill="none" stroke="#ff7f00" stroke-width="1" /><polyline points="504.0,393.2 513.8,393.2 513.8,400.1 504.0,400.1 504.0,393.2" fill="none" stroke="#ff7f00" stroke-width="1" /><polyline points="509.0,395.2 509.0,399.1 512.0,399.1" fill="none" stroke="#ff7f00" stroke-width="1" /><polyline points="488.0,410.2 500.3,410.2 500.3,417.3 488.0,417.3 488.0,410.2" fill="none" stroke="#ff7f00" stroke-width="1" /><polyline points="493.0,412.2 493.0,416.3 496.0,416.3" fill="none" stroke="#ff7f00" stroke-width="1" /><polyline points="530.8,310.0 528.8,328.9 530.1,375.7 538.7,392.9 545.7,393.4" fill="none" stroke="#ff7f00" stroke-width="1" /><polyline points="537.4,310.3 534.5,331.0 535.9,374.1 541.7,385.8 546.3,387.4" fill="none" stroke="#ff7f00" stroke-width="1" /><polyline points="556.9,328.0 559.1,352.0 556.9,390.3 552.4,403.7 548.8,411.8" fill="none" stroke="#ff7f00" stroke-width="1" /><polyline points="550.2,328.9 553.2,351.1 552.0,386.7 548.9,396.8 543.5,407.6" fill="none" stroke="#ff7f00" stroke-width="1" /><polyline points="550.2,328.9 556.9,328.0" fill="none" stroke="#ff7f00" stroke-width="1" /><polyline points="545.6,386.9 555.8,386.9 555.8,393.9 545.6,393.9 545.6,386.9" fill="none" stroke="#ff7f00" stroke-width="1" /><polyline points="550.6,388.9 550.6,392.9 553.6,392.9" fill="none" stroke="#ff7f00" stroke-width="1" /><polyline points="531.3,404.0 543.5,404.0 543.5,411.2 531.3,411.2 531.3,404.0" fill="none" stroke="#ff7f00" stroke-width="1" /><polyline points="536.3,406.0 536.3,410.2 539.3,410.2" fill="none" stroke="#ff7f00" stroke-width="1" /><polyline points="573.5,304.2 570.5,322.8 571.4,369.4 580.2,386.7 586.9,386.9" fill="none" stroke="#ff7f00" stroke-width="1" /><polyline points="580.0,304.2 575.8,325.2 577.0,367.2 583.1,379.5 587.7,381.2" fill="none" stroke="#ff7f00" stroke-width="1" /><polyline points="598.4,322.8 601.3,343.5 599.3,386.2 594.3,400.2 591.6,405.7" fill="none" stroke="#ff7f00" stroke-width="1" /><polyline points="591.9,323.7 595.3,343.0 594.4,383.1 590.7,394.0 586.2,400.8" fill="none" stroke="#ff7f00" stroke-width="1" /><polyline points="591.9,323.7 598.4,322.8" fill="none" stroke="#ff7f00" stroke-width="1" /><polyline points="586.7,380.6 597.3,380.6 597.3,387.5 586.7,387.5 586.7,380.6" fill="none" stroke="#ff7f00" stroke-width="1" /><polyline points="591.7,382.6 591.7,386.5 594.7,386.5" fill="none" stroke="#ff7f00" stroke-width="1" /><polyline points="574.2,397.6 586.2,397.6 586.2,404.9 574.2,404.9 574.2,397.6" fill="none" stroke="#ff7f00" stroke-width="1" /><polyline points="579.2,399.6 579.2,403.9 582.2,403.9" fill="none" stroke="#ff7f00" stroke-width="1" /><polyline points="617.0,298.0 613.0,316.2 613.4,362.7 622.5,380.0 628.8,380.0" fill="none" stroke="#ff7f00" stroke-width="1" /><polyline points="623.4,297.7 617.9,319.0 618.8,360.0 625.2,372.7 629.8,374.6" fill="none" stroke="#ff7f00" stroke-width="1" /><polyline points="640.6,317.2 644.3,334.5 642.5,381.8 637.0,396.4 635.2,399.2" fill="none" stroke="#ff7f00" stroke-width="1" /><polyline points="634.3,318.1 638.3,334.5 637.6,379.1 633.4,390.9 629.7,393.7" fill="none" stroke="#ff7f00" stroke-width="1" /><polyline points="634.3,318.1 640.6,317.2" fill="none" stroke="#ff7f00" stroke-width="1" /><polyline points="628.6,373.8 639.6,373.8 639.6,380.8 628.6,380.8 628.6,373.8" fill="none" stroke="#ff7f00" stroke-width="1" /><polyline points="633.6,375.8 633.6,379.8 636.6,379.8" fill="none" stroke="#ff7f00" stroke-width="1" /><polyline points="617.9,390.9 629.7,390.9 629.7,398.2 617.9,398.2 617.9,390.9" fill="none" stroke="#ff7f00" stroke-width="1" /><polyline points="622.9,392.9 622.9,397.2 625.9,397.2" fill="none" stroke="#ff7f00" stroke-width="1" /><polyline points="660.0,291.7 654.7,310.8 655.7,351.8 664.2,370.5 671.7,374.1" fill="none" stroke="#ff7f00" stroke-width="1" /><polyline points="666.2,291.3 660.0,312.7 661.2,349.3 667.4,363.8 672.7,368.4" fill="none" stroke="#ff7f00" stroke-width="1" /><polyline points="681.5,310.6 685.6,329.8 683.9,375.8 678.7,389.4 676.3,392.8" fill="none" stroke="#ff7f00" stroke-width="1" /><polyline points="674.9,311.4 679.6,329.8 678.9,371.1 674.5,385.7 670.4,389.0" fill="none" stroke="#ff7f00" stroke-width="1" /><polyline points="674.9,311.4 681.5,310.6" fill="none" stroke="#ff7f00" stroke-width="1" /><polyline points="671.5,367.5 682.3,367.5 682.3,374.8 671.5,374.8 671.5,367.5" fill="none" stroke="#ff7f00" stroke-width="1" /><polyline points="676.5,369.5 676.5,373.8 679.5,373.8" fill="none" stroke="#ff7f00" stroke-width="1" /><polyline points="658.8,384.9 670.4,384.9 670.4,392.1 658.8,392.1 658.8,384.9" fill="none" stroke="#ff7f00" stroke-width="1" /><polyline points="663.8,386.9 663.8,391.1 666.8,391.1" fill="none" stroke="#ff7f00" stroke-width="1" /><polyline points="703.0,285.2 696.4,305.2 698.0,340.7 705.9,360.7 714.5,367.9" fill="none" stroke="#ff7f00" stroke-width="1" /><polyline points="708.9,284.7 702.1,306.2 703.6,338.3 709.6,354.6 715.6,361.9" fill="none" stroke="#ff7f00" stroke-width="1" /><polyline points="722.3,303.6 726.8,324.9 725.2,369.6 720.4,382.1 717.5,386.0" fill="none" stroke="#ff7f00" stroke-width="1" /><polyline points="715.4,304.3 720.8,324.9 720.3,362.7 715.7,380.2 711.1,384.1" fill="none" stroke="#ff7f00" stroke-width="1" /><polyline points="715.4,304.3 722.3,303.6" fill="none" stroke="#ff7f00" stroke-width="1" /><polyline points="714.5,360.9 724.9,360.9 724.9,368.5 714.5,368.5 714.5,360.9" fill="none" stroke="#ff7f00" stroke-width="1" /><polyline points="719.5,362.9 719.5,367.5 722.5,367.5" fill="none" stroke="#ff7f00" stroke-width="1" /><polyline points="699.6,378.7 711.1,378.7 711.1,385.7 699.6,385.7 699.6,378.7" fill="none" stroke="#ff7f00" stroke-width="1" /><polyline points="704.6,380.7 704.6,384.7 707.6,384.7" fill="none" stroke="#ff7f00" stroke-width="1" /><polyline points="747.0,278.3 739.1,299.2 741.3,329.0 748.6,350.5 758.4,361.3" fill="none" stroke="#ff7f00" stroke-width="1" /><polyline points="752.7,277.6 745.2,299.2 747.0,326.8 752.7,345.0 759.5,355.0" fill="none" stroke="#ff7f00" stroke-width="1" /><polyline points="764.1,296.3 769.1,319.6 767.6,363.0 763.1,374.5 759.6,378.9" fill="none" stroke="#ff7f00" stroke-width="1" /><polyline points="756.9,296.9 763.1,319.7 762.6,354.0 757.8,374.4 752.8,378.9" fill="none" stroke="#ff7f00" stroke-width="1" /><polyline points="756.9,296.9 764.1,296.3" fill="none" stroke="#ff7f00" stroke-width="1" /><polyline points="758.4,353.9 768.6,353.9 768.6,361.9 758.4,361.9 758.4,353.9" fill="none" stroke="#ff7f00" stroke-width="1" /><polyline points="763.4,355.9 763.4,360.9 766.4,360.9" fill="none" stroke="#ff7f00" stroke-width="1" /><polyline points="741.4,372.1 752.8,372.1 752.8,378.9 741.4,378.9 741.4,372.1" fill="none" stroke="#ff7f00" stroke-width="1" /><polyline points="746.4,374.1 746.4,377.9 749.4,377.9" fill="none" stroke="#ff7f00" stroke-width="1" /><polyline points="791.0,271.2 781.6,294.3 784.5,321.4 792.9,343.1 803.6,354.5" fill="none" stroke="#ff7f00" stroke-width="1" /><polyline points="796.6,270.9 787.6,294.3 790.1,319.5 797.1,338.5 805.6,349.7" fill="none" stroke="#ff7f00" stroke-width="1" /><polyline points="803.9,291.0 811.3,313.4 810.0,348.3 804.1,362.1 799.6,372.1" fill="none" stroke="#ff7f00" stroke-width="1" /><polyline points="797.7,291.4 805.4,313.5 805.1,341.2 799.2,361.3 793.6,372.1" fill="none" stroke="#ff7f00" stroke-width="1" /><polyline points="797.7,291.4 803.9,291.0" fill="none" stroke="#ff7f00" stroke-width="1" /><polyline points="804.4,349.0 815.3,349.0 815.3,356.2 804.4,356.2 804.4,349.0" fill="none" stroke="#ff7f00" stroke-width="1" /><polyline points="809.4,351.0 809.4,355.2 812.4,355.2" fill="none" stroke="#ff7f00" stroke-width="1" /><polyline points="780.6,365.9 792.3,365.9 792.3,373.0 780.6,373.0 780.6,365.9" fill="none" stroke="#ff7f00" stroke-width="1" /><polyline points="785.6,367.9 785.6,372.0 788.6,372.0" fill="none" stroke="#ff7f00" stroke-width="1" /><polyline points="836.0,263.7 825.2,289.1 828.7,313.6 838.4,335.4 849.8,347.3" fill="none" stroke="#ff7f00" stroke-width="1" /><polyline points="841.6,263.7 830.9,289.1 834.2,312.0 842.5,331.7 852.9,344.2" fill="none" stroke="#ff7f00" stroke-width="1" /><polyline points="844.6,285.4 854.4,306.9 853.3,332.7 846.0,349.1 840.3,365.0" fill="none" stroke="#ff7f00" stroke-width="1" /><polyline points="839.4,285.6 848.7,307.0 848.6,327.7 841.5,347.3 835.3,365.0" fill="none" stroke="#ff7f00" stroke-width="1" /><polyline points="839.4,285.6 844.6,285.4" fill="none" stroke="#ff7f00" stroke-width="1" /><polyline points="851.6,343.8 863.2,343.8 863.2,350.1 851.6,350.1 851.6,343.8" fill="none" stroke="#ff7f00" stroke-width="1" /><polyline points="856.6,345.8 856.6,349.1 859.6,349.1" fill="none" stroke="#ff7f00" stroke-width="1" /><polyline points="820.6,359.4 832.6,359.4 832.6,366.7 820.6,366.7 820.6,359.4" fill="none" stroke="#ff7f00" stroke-width="1" /><polyline points="825.6,361.4 825.6,365.7 828.6,365.7" fill="none" stroke="#ff7f00" stroke-width="1" /><polyline points="880.0,256.1 867.8,283.9 871.8,305.8 882.8,327.7 895.0,339.9" fill="none" stroke="#ff7f00" stroke-width="1" /><polyline points="885.5,256.5 873.3,283.9 877.3,304.5 886.9,324.9 899.1,338.5" fill="none" stroke="#ff7f00" stroke-width="1" /><polyline points="884.3,279.7 896.6,300.3 895.7,317.1 887.0,336.1 880.2,357.7" fill="none" stroke="#ff7f00" stroke-width="1" /><polyline points="880.1,279.7 891.1,300.3 891.1,314.3 882.9,333.3 876.0,357.7" fill="none" stroke="#ff7f00" stroke-width="1" /><polyline points="880.1,279.7 884.3,279.7" fill="none" stroke="#ff7f00" stroke-width="1" /><polyline points="897.7,338.5 910.0,338.5 910.0,344.0 897.7,344.0 897.7,338.5" fill="none" stroke="#ff7f00" stroke-width="1" /><polyline points="902.7,340.5 902.7,343.0 905.7,343.0" fill="none" stroke="#ff7f00" stroke-width="1" /><polyline points="859.7,352.8 872.0,352.8 872.0,360.4 859.7,360.4 859.7,352.8" fill="none" stroke="#ff7f00" stroke-width="1" /><polyline points="864.7,354.8 864.7,359.4 867.7,359.4" fill="none" stroke="#ff7f00" stroke-width="1" /><polyline points="374.8,378.4 383.9,378.4 383.9,383.4 387.3,383.4" fill="none" stroke="#ff7f00" stroke-width="1" /><polyline points="200.2,349.4 200.2,384.7 239.7,385.5 240.3,416.0 243.0,443.0" fill="none" stroke="#ff7f00" stroke-width="1" /><polyline points="203.3,349.4 203.3,381.9 245.0,382.2 245.5,413.0 247.8,443.0" fill="none" stroke="#ff7f00" stroke-width="1" /><polyline points="200.2,349.4 203.3,349.4" fill="none" stroke="#ff7f00" stroke-width="1" /><polyline points="240.0,345.2 240.0,382.0" fill="none" stroke="#ff7f00" stroke-width="1" /><polyline points="243.1,345.2 243.1,377.2 265.0,378.8 265.0,394.0" fill="none" stroke="#ff7f00" stroke-width="1" /><polyline points="240.0,345.2 243.1,345.2" fill="none" stroke="#ff7f00" stroke-width="1" /><polyline points="254.0,383.4 254.0,416.0 252.5,442.5" fill="none" stroke="#ff7f00" stroke-width="1" /><polyline points="259.5,384.2 257.2,443.0" fill="none" stroke="#ff7f00" stroke-width="1" /><polyline points="260.3,386.6 268.0,435.0 271.0,436.0" fill="none" stroke="#ff7f00" stroke-width="1" /><polyline points="265.8,386.6 273.6,436.6" fill="none" stroke="#ff7f00" stroke-width="1" /><polyline points="245.0,382.2 260.3,383.5 297.8,391.3" fill="none" stroke="#ff7f00" stroke-width="1" /><polyline points="243.1,377.2 265.0,378.8 298.6,388.0" fill="none" stroke="#ff7f00" stroke-width="1" /><polyline points="280.3,340.5 280.3,376.4 287.7,376.4 287.7,397.5 291.6,416.3 297.8,428.8 308.8,430.3" fill="none" stroke="#ff7f00" stroke-width="1" /><polyline points="283.8,340.5 283.8,372.5 293.1,372.5 293.1,388.9 293.9,400.6 301.7,424.0 308.8,424.8" fill="none" stroke="#ff7f00" stroke-width="1" /><polyline points="280.3,340.5 283.8,340.5" fill="none" stroke="#ff7f00" stroke-width="1" /><polyline points="291.6,353.8 298.6,353.8 298.6,391.3" fill="none" stroke="#ff7f00" stroke-width="1" /><polyline points="295.5,355.0 295.5,389.0" fill="none" stroke="#ff7f00" stroke-width="1" /><polyline points="308.0,424.8 318.0,424.8 318.0,428.8 308.0,428.8 308.0,424.8" fill="none" stroke="#ff7f00" stroke-width="1" /><polyline points="309.5,428.8 309.5,440.5 315.0,440.5 315.0,428.8" fill="none" stroke="#ff7f00" stroke-width="1" /><polyline points="320.5,336.6 321.3,371.0 323.6,386.6 326.0,407.0 333.8,422.5 337.0,418.0" fill="none" stroke="#ff7f00" stroke-width="1" /><polyline points="327.5,336.6 326.7,371.0 329.0,381.9 331.0,402.0 337.7,417.8" fill="none" stroke="#ff7f00" stroke-width="1" /><polyline points="320.5,336.6 327.5,336.6" fill="none" stroke="#ff7f00" stroke-width="1" /><polyline points="323.6,386.6 317.3,381.9 315.0,422.5 311.9,427.2" fill="none" stroke="#ff7f00" stroke-width="1" /><polyline points="327.5,385.0 320.0,384.0 318.5,421.0" fill="none" stroke="#ff7f00" stroke-width="1" /><polyline points="336.9,350.6 343.9,350.6 343.9,388.1 327.5,385.0" fill="none" stroke="#ff7f00" stroke-width="1" /><polyline points="336.9,350.6 340.8,384.2 327.5,383.0" fill="none" stroke="#ff7f00" stroke-width="1" /><polyline points="337.0,417.8 349.0,417.8 349.0,423.5 337.0,423.5 337.0,417.8" fill="none" stroke="#ff7f00" stroke-width="1" /><polyline points="322.0,436.0 334.0,436.0 334.0,441.5 322.0,441.5 322.0,436.0" fill="none" stroke="#ff7f00" stroke-width="1" /><polyline points="243.0,438.0 247.0,438.0 247.0,442.0 244.0,442.0" fill="none" stroke="#ff7f00" stroke-width="1" /><polyline points="251.0,439.0 255.0,439.0 255.0,443.0" fill="none" stroke="#ff7f00" stroke-width="1" /><polyline points="266.0,431.0 270.0,431.0 270.0,436.0" fill="none" stroke="#ff7f00" stroke-width="1" /><polyline points="922.0,248.3 948.3,247.2 975.7,249.5 1004.0,252.9" fill="none" stroke="#ff7f00" stroke-width="1" /><polyline points="927.8,254.0 1003.0,259.7" fill="none" stroke="#ff7f00" stroke-width="1" /><polyline points="922.0,248.3 913.0,273.4 914.2,287.0 922.1,307.6 937.0,323.5 955.2,336.0" fill="none" stroke="#ff7f00" stroke-width="1" /><polyline points="927.8,254.0 919.2,273.4 920.5,287.0 927.8,305.3 942.6,322.4 959.7,333.8" fill="none" stroke="#ff7f00" stroke-width="1" /><polyline points="1004.0,252.9 1017.4,275.7 1016.2,298.5 1007.6,316.7 989.3,331.5 967.7,338.3" fill="none" stroke="#ff7f00" stroke-width="1" /><polyline points="1003.0,259.7 1012.1,276.8 1010.5,298.5 1003.0,314.4 987.1,328.1 967.7,334.4" fill="none" stroke="#ff7f00" stroke-width="1" /><polyline points="967.7,334.4 967.7,338.3 985.0,338.0" fill="none" stroke="#ff7f00" stroke-width="1" /><polyline points="960.9,263.1 978.0,287.0 973.4,312.1 964.3,330.3 955.0,340.0" fill="none" stroke="#ff7f00" stroke-width="1" /><polyline points="955.0,264.0 971.5,287.0 967.5,311.0 958.0,329.0 948.0,341.0" fill="none" stroke="#ff7f00" stroke-width="1" /><polyline points="919.9,271.1 931.0,300.0 940.0,325.0 953.0,341.0" fill="none" stroke="#ff7f00" stroke-width="1" /><polyline points="925.0,270.0 936.0,298.0 946.0,324.0 958.0,339.5" fill="none" stroke="#ff7f00" stroke-width="1" /><polyline points="1003.0,253.0 1005.0,256.0" fill="none" stroke="#ff7f00" stroke-width="1" /><circle cx="1003.500" cy="257" r="1.500" fill="none" stroke="#ff7f00"/><polyline points="1003.0,334.9 1004.2,333.6 1005.9,332.1 1007.8,330.2 1010.0,328.1 1012.3,325.7 1014.6,323.0 1016.9,320.0 1019.0,316.7 1021.0,313.0 1023.2,308.8 1025.3,304.2 1027.5,299.3 1029.5,294.4 1031.5,289.4 1033.3,284.7 1034.9,280.2 1036.3,275.9 1037.7,271.5 1038.9,267.1 1040.0,262.9 1040.9,258.8 1041.7,255.0 1042.4,251.4 1042.9,248.3 1043.2,245.5 1043.3,243.1 1043.3,241.0 1043.1,239.1 1042.8,237.4 1042.4,235.9 1042.1,234.6 1041.7,233.5 1041.3,232.5 1040.8,231.8 1040.3,231.3 1039.7,231.0 1039.1,230.9 1038.5,230.8 1037.8,230.9 1037.2,231.0 1036.5,231.3 1035.7,231.8 1034.9,232.5 1034.1,233.2 1033.3,234.0 1032.6,234.8 1031.9,235.4 1031.5,235.8" fill="none" stroke="#0000c8" stroke-width="1" /><polyline points="1006.0,334.5 1007.2,333.1 1008.9,331.3 1010.9,329.2 1013.1,326.8 1015.4,324.1 1017.7,321.2 1019.9,318.2 1022.0,315.0 1024.0,311.5 1026.0,307.7 1028.1,303.5 1030.1,299.2 1032.1,294.9 1034.0,290.6 1035.7,286.4 1037.2,282.5 1038.5,278.8 1039.7,275.1 1040.8,271.6 1041.8,268.1 1042.6,264.7 1043.3,261.4 1044.0,258.3 1044.5,255.2 1045.0,252.2 1045.3,249.3 1045.6,246.5 1045.8,243.8 1045.8,241.3 1045.7,238.9 1045.5,236.7 1045.1,234.7 1044.5,232.9 1043.7,231.2 1042.8,229.6 1041.7,228.3 1040.5,227.1 1039.4,226.1 1038.3,225.4 1037.2,225.0 1036.2,225.0 1035.0,225.3 1033.9,226.0 1032.7,226.9 1031.6,227.8 1030.6,228.8 1029.8,229.5 1029.2,230.0" fill="none" stroke="#0000c8" stroke-width="1" /><polyline points="1014.0,333.0 1014.9,331.5 1016.1,329.5 1017.5,327.1 1019.0,324.4 1020.7,321.5 1022.4,318.5 1024.1,315.3 1025.8,312.1 1027.5,308.8 1029.3,305.1 1031.2,301.4 1033.2,297.4 1035.1,293.5 1036.9,289.5 1038.5,285.7 1040.0,282.0 1041.3,278.4 1042.5,274.8 1043.6,271.3 1044.6,267.8 1045.5,264.4 1046.2,261.1 1046.9,258.0 1047.5,255.0 1048.0,252.2 1048.5,249.5 1048.8,247.0 1049.1,244.6 1049.2,242.3 1049.1,240.1 1048.9,238.0 1048.5,236.0 1047.8,234.0 1046.9,232.0 1045.8,230.0 1044.5,228.1 1043.2,226.4 1041.8,225.0 1040.4,224.0 1039.0,223.3 1037.6,223.2 1036.0,223.6 1034.3,224.3 1032.7,225.4 1031.1,226.5 1029.6,227.5 1028.4,228.4 1027.5,229.0" fill="none" stroke="#0000c8" stroke-width="1" /><polyline points="1016.7,332.6 1017.6,331.0 1018.9,328.9 1020.3,326.5 1021.9,323.7 1023.7,320.7 1025.5,317.5 1027.3,314.2 1029.0,311.0 1030.8,307.6 1032.6,304.0 1034.6,300.1 1036.5,296.2 1038.5,292.3 1040.3,288.3 1042.0,284.6 1043.5,281.0 1044.8,277.6 1046.0,274.2 1047.1,270.9 1048.1,267.6 1048.9,264.5 1049.7,261.5 1050.4,258.7 1051.0,256.0 1051.5,253.6 1051.9,251.3 1052.3,249.2 1052.5,247.3 1052.6,245.4 1052.7,243.6 1052.6,241.8 1052.4,240.0 1052.1,238.1 1051.6,236.2 1051.0,234.4 1050.3,232.5 1049.5,230.8 1048.7,229.2 1047.8,227.8 1047.0,226.5 1046.2,225.4 1045.3,224.5 1044.4,223.8 1043.5,223.1 1042.6,222.6 1041.6,222.2 1040.5,221.9 1039.5,221.7 1038.4,221.6 1037.1,221.7 1035.9,221.9 1034.5,222.2 1033.3,222.6 1032.0,223.1 1030.9,223.5 1030.0,224.0 1029.2,224.5 1028.5,225.2 1027.9,225.9 1027.3,226.6 1026.8,227.4 1026.4,228.0 1026.1,228.6 1025.8,229.0" fill="none" stroke="#0000c8" stroke-width="1" /><polyline points="1003.0,335.0 1017.0,332.6" fill="none" stroke="#0000c8" stroke-width="2" /><path d="M1025 227L1032 226L1031.500 241L1029 235L1027.500 241Z" fill="#00004a"/><polyline points="823.5,213.5 823.5,359.8" fill="none" stroke="#000" stroke-width="1" /><polyline points="828.2,213.5 828.2,359.8" fill="none" stroke="#000" stroke-width="1" /><polyline points="830.3,213.5 830.3,359.8" fill="none" stroke="#000" stroke-width="1" /><polyline points="835.8,213.5 835.8,359.8" fill="none" stroke="#000" stroke-width="1" /><polyline points="823.5,359.8 836.0,359.8" fill="none" stroke="#000" stroke-width="1" /><polyline points="823.5,356.5 836.0,356.5" fill="none" stroke="#000" stroke-width="1" /><polyline points="823.5,213.3 955.2,194.1" fill="none" stroke="#000" stroke-width="1" /><polyline points="823.5,215.6 957.0,196.3" fill="none" stroke="#000" stroke-width="1" /><polyline points="826.0,217.5 974.5,196.6" fill="none" stroke="#000" stroke-width="1" /><polyline points="835.8,218.5 974.5,198.8" fill="none" stroke="#000" stroke-width="1" /><polyline points="823.5,213.3 823.5,218.0 836.0,218.5" fill="none" stroke="#000" stroke-width="1" /><polyline points="955.2,194.1 974.5,194.1 974.5,198.8 957.0,198.2 955.2,194.1" fill="none" stroke="#000" stroke-width="1" /><polyline points="955.2,194.1 925.6,247.2" fill="none" stroke="#000" stroke-width="1" /><polyline points="957.5,195.5 928.5,247.5" fill="none" stroke="#000" stroke-width="1" /><polyline points="974.5,194.1 1004.1,252.9" fill="none" stroke="#000" stroke-width="1" /><polyline points="972.5,195.0 1001.5,252.5" fill="none" stroke="#000" stroke-width="1" /><polyline points="919.9,251.8 1052.0,227.2" fill="none" stroke="#000" stroke-width="1" /><polyline points="921.0,253.6 1040.0,231.8" fill="none" stroke="#000" stroke-width="1" /><polyline points="985.0,239.5 1032.0,230.8" fill="none" stroke="#000" stroke-width="1" /><polyline points="948.3,246.7 996.2,252.4" fill="none" stroke="#000" stroke-width="2" /></g><defs><linearGradient id="uz" x1="0" x2="1" y1="0" y2="0"><stop offset="0" stop-color="#0a6ad8"/><stop offset=".5" stop-color="#7fe0ff"/><stop offset="1" stop-color="#0a6ad8"/></linearGradient><linearGradient id="ux" x1="0" x2="1" y1="0" y2="0"><stop offset="0" stop-color="#ff2020"/><stop offset=".5" stop-color="#f01818"/><stop offset="1" stop-color="#5a0808"/></linearGradient><linearGradient id="uy" x1="0" x2="1" y1="0" y2="0"><stop offset="0" stop-color="#20e020"/><stop offset=".6" stop-color="#18c018"/><stop offset="1" stop-color="#0a7a0a"/></linearGradient></defs><path d="M202 472.500L216 467.500Q218 473 216 479Z" fill="url(#uy)"/><rect x="214" y="472.800" width="22" height="2.500" fill="#10d810"/><rect x="214" y="475" width="22" height="1" fill="#087808"/><rect x="238" y="472.500" width="12" height="3.500" fill="#8b0a0a"/><path d="M260.500 471.800L250 467.500Q247 473 250 478.500Z" fill="url(#ux)"/><rect x="235" y="449" width="3.200" height="27" fill="#2aa0ff"/><path d="M236.500 434.800L242 449.800H231Z" fill="url(#uz)"/><path d="M240 425.500H247L240 433.500H247.500" stroke="#1e90e8" stroke-width="1" fill="none"/><path d="M214.500 459.500L218.500 463.500L222.800 459.500M218.500 463.500V467.500" stroke="#10d010" stroke-width="1" fill="none"/><path d="M261.500 458.500L269 467.500M269 458.500L261.500 467.500" stroke="#e81818" stroke-width="1" fill="none"/><g shape-rendering="crispEdges"><path d="M101.500 102V142" stroke="#000090" stroke-width="1"/><path d="M61 113.500L79 114.500L101 117.500L122 118" stroke="#00a000" fill="none"/><path d="M88 119.500L101 117.500L118 114.500L130 113" stroke="#a00000" fill="none"/><rect x="98.500" y="114.500" width="6" height="6" fill="none" stroke="#00a000"/></g></svg><svg style="left:3px;top:4px;" width="14" height="14" viewBox="0 0 16 16"><rect x="0" y="0" width="16" height="16" fill="#1f9b8c"/><path d="M0 0H10V11H0Z" fill="#2aa898"/><path d="M1.500 10.500L5 1.500L8.500 10.500M2.800 7.500H7.200" stroke="#fff" stroke-width="1.500" fill="none"/><path d="M3 2Q6 .5 9 2" stroke="#0c5c52" stroke-width="1" fill="none"/><path d="M11 0V16M0 11.500H16" stroke="#e8f6f4" stroke-width="1"/><rect x="9" y="9.500" width="4" height="4" fill="#1f9b8c" stroke="#fff" stroke-width="1"/><path d="M0 14H8" stroke="#0c5c52" stroke-width="1.500"/></svg>
<svg style="left:8px;top:24px;" width="16" height="16" viewBox="0 0 15 17"><path d="M2 0H9L14 5V12H2Z" fill="#1f4a80"/><path d="M9 0L14 5H9Z" fill="#b8cce4"/><path d="M3 6L14 11V16H0V9Z" fill="#f2c81c"/><path d="M0 16H15V17H0Z" fill="#d8a810"/><path d="M4 0V6M1 3H7" stroke="#fff" stroke-width="1"/><path d="M6 2Q10 4 12 9" stroke="#7a9cc8" stroke-width="1" fill="none"/></svg>
<svg style="left:407px;top:739px;" width="18" height="17" viewBox="0 0 18 17"><path d="M1.500 1.500H13.500M1.500 15.500H13.500M1.500 1.500V3M13.500 1.500V3M1.500 15.500V14M13.500 15.500V14" stroke="#fff" stroke-width="1" fill="none"/><rect x="2.500" y="5.500" width="10" height="6" fill="none" stroke="#fff" stroke-width="1"/><path d="M16.500 1.500V6.500M16.500 8.500V15.500" stroke="#fff" stroke-width="1.200"/></svg>
<svg style="left:456px;top:737px;" width="22" height="22" viewBox="0 0 22 22"><path d="M1 9.500Q2 1 11 1Q20.500 1 20.500 11V13H7Q7.500 17.500 12.500 17.500Q16.500 17.500 19.500 15.800V20Q16 21.500 12 21.500Q2.500 21 2.500 12.500Q2.500 8 6.500 5.500Q3 6 1 9.500ZM7.200 9.500H14.800Q14.500 5.500 11 5.500Q7.800 5.500 7.200 9.500Z" fill="#1b80d6"/></svg>
<svg style="left:505px;top:738px;" width="22" height="19" viewBox="0 0 22 19"><path d="M0 1H8L10 3H21.500V5H0Z" fill="#e8a420"/><rect x="0" y="3.500" width="21.500" height="14.500" fill="#ffd86a"/><path d="M0 16H21.500V18H0Z" fill="#f0bf40"/><path d="M4.500 18V11H17V18H13.500V14.500H8V18Z" fill="#3b97dc"/><rect x="4.500" y="10" width="12.500" height="2" fill="#62b4ec"/></svg>
<svg style="left:555.5px;top:736px;" width="19" height="24" viewBox="0 0 19 24"><rect x="0" y="0" width="18.500" height="24" fill="#fff"/><rect x="2.500" y="2.500" width="13.500" height="3.800" fill="#1d1d1d"/><path d="M3 9H6.2V12.2Z" fill="#1d1d1d"/><path d="M3 13.6H6.2V16.8Z" fill="#1d1d1d"/><path d="M3 18.2H6.2V21.4Z" fill="#1d1d1d"/><path d="M7.6 9H10.8V12.2Z" fill="#1d1d1d"/><path d="M7.6 13.6H10.8V16.8Z" fill="#1d1d1d"/><path d="M7.6 18.2H10.8V21.4Z" fill="#1d1d1d"/><path d="M12.2 9H15.4V12.2Z" fill="#1d1d1d"/><path d="M12.2 13.6H15.4V16.8Z" fill="#1d1d1d"/><path d="M12.2 18.2H15.4V21.4Z" fill="#1d1d1d"/></svg>
<svg style="left:602px;top:736px;" width="27" height="27" viewBox="0 0 27 27"><rect x="11" y="5.500" width="12" height="13" fill="#0f68b4"/><path d="M12 7L17.500 12L23 7V6H12Z" fill="#fff"/><path d="M0 3L13.500 0V24L0 21Z" fill="#0c64ae"/><ellipse cx="6.800" cy="12" rx="3" ry="4" fill="none" stroke="#fff" stroke-width="1.800"/><rect x="11.500" y="14.500" width="14.500" height="11" fill="#e9b878"/><path d="M11.500 14.500L18.800 21L26 14.500" stroke="#fff" stroke-width="1.300" fill="none"/></svg>
<svg style="left:650.5px;top:736px;" width="25" height="24" viewBox="0 0 25 24"><rect x=".5" y=".5" width="24" height="23" fill="#1f9b8c" stroke="#fff" stroke-width="1"/><path d="M1 1H14V15H1Z" fill="#2aa898"/><path d="M3 15L8 3L13 15M5 11H11" stroke="#fff" stroke-width="2" fill="none"/><path d="M4 4Q9 1 14 4" stroke="#0c5c52" stroke-width="1.200" fill="none"/><path d="M16.500 1V23M1 16.500H24" stroke="#e8f6f4" stroke-width="1"/><rect x="14" y="14" width="5" height="5" fill="#1f9b8c" stroke="#fff" stroke-width="1"/><path d="M1 20H12" stroke="#0c5c52" stroke-width="2"/></svg>
<svg style="left:700px;top:736px;" width="24" height="24" viewBox="0 0 24 24"><rect x="12" y="3.500" width="11" height="16.500" fill="#fff" stroke="#1e7145" stroke-width="1"/><path d="M12 7H23M12 10.300H23M12 13.600H23M12 17H23M17.500 3.500V20" stroke="#1e7145" stroke-width=".9"/><path d="M0 2.500L14 0V23.500L0 21Z" fill="#1e7145"/><path d="M4 7.500L10 16.500M10 7.500L4 16.500" stroke="#fff" stroke-width="2" fill="none"/></svg>
<svg style="left:749px;top:738px;" width="24" height="23" viewBox="0 0 24 23"><path d="M2 9Q0 18 8 20.500Q12 21.500 14 20" stroke="#f0b860" stroke-width="2" fill="none"/><rect x="3" y="2.500" width="12" height="15" fill="#f4f4f4"/><rect x="4" y="3.500" width="10" height="13" fill="#f08a1c"/><rect x="9" y="0" width="14" height="10" fill="#f4f4f4"/><rect x="10" y="1" width="12" height="8" fill="#9cc8f0"/><rect x="11" y="8.500" width="11" height="9.500" fill="#f4f4f4"/><rect x="12" y="9.500" width="9" height="7.500" fill="#7fb8e8"/><circle cx="12" cy="8" r="5" fill="#ee5a10"/><circle cx="12" cy="8" r="2" fill="#f8b020"/><path d="M12 17L16 13L21 17Z" fill="#78b848"/></svg>
<svg style="left:798.5px;top:736.5px;" width="23" height="23" viewBox="0 0 23 23"><path d="M11.500 .8A10.400 10.400 0 1 1 6 20.300L1 21.800L2.600 17A10.400 10.400 0 0 1 11.500 .8Z" fill="#2cb742" stroke="#fff" stroke-width="1.500"/><path d="M7.500 6.500Q6.500 7.500 7 9.500Q8.500 14 13.500 15.800Q15.500 16.200 16.500 14.800L14.200 13.200L13 14Q10.200 12.800 9.300 10L10.300 9Z" fill="#fff"/></svg>
<div style="left:773px;top:766px;width:8px;height:2px;background:#5a98cc;"></div>
<svg style="left:1152px;top:743px;" width="14" height="9" viewBox="0 0 14 9"><path d="M1 7.500L7 1.500L13 7.500" stroke="#fff" stroke-width="1.300" fill="none"/></svg>
<svg style="left:1174px;top:740px;" width="18" height="16" viewBox="0 0 18 16"><path d="M1 5.500H3.500L7 2V13.500L3.500 10H1Z" stroke="#fff" stroke-width="1" fill="none"/><path d="M9.500 5.500Q11 7.750 9.500 10M12 3.500Q14.800 7.750 12 12M14.500 1.500Q18.500 7.750 14.500 14" stroke="#fff" stroke-width="1.100" fill="none"/></svg>
<svg style="left:1201px;top:742px;" width="15" height="14" viewBox="0 0 15 14"><circle cx="11.500" cy="11.500" r="1.500" fill="#fff"/><path d="M6.500 12.500A5.500 5.500 0 0 1 12.500 6.500" stroke="#fff" stroke-width="1.200" fill="none"/><path d="M3.500 12.500A8.500 8.500 0 0 1 12.500 3.500" stroke="#cfcfcf" stroke-width="1.200" fill="none"/><path d="M.8 12.500A11.500 11.500 0 0 1 12.500 .8" stroke="#9a9a9a" stroke-width="1.200" fill="none"/></svg>
<svg style="left:1222px;top:741px;" width="19" height="14" viewBox="0 0 19 14"><rect x="6.500" y="3.500" width="10.500" height="7" fill="none" stroke="#fff" stroke-width="1.100"/><rect x="17" y="5.500" width="1.500" height="3" fill="#fff"/><rect x="7.500" y="4.500" width="6" height="5" fill="#fff"/><path d="M2 .5V3M5 .5V3" stroke="#fff" stroke-width="1.100"/><path d="M.8 3H6.200V5.500Q6.200 7.500 3.500 7.500Q.8 7.500 .8 5.500ZM3.500 7.500V11" stroke="#fff" stroke-width="1" fill="#fff"/></svg>
<svg style="left:1324px;top:739px;" width="32" height="28" viewBox="0 0 32 28"><path d="M1 .5H17V13H5.500L1 13Z" fill="#fff"/><path d="M4 4H14M4 6.500H14M4 9H14" stroke="#222" stroke-width="1"/><circle cx="16.500" cy="16.500" r="9.500" fill="#303030" stroke="#8a8a8a" stroke-width="1"/></svg>
<span class="t" style="left:1334.00px;top:748.69px;font-size:11px;line-height:14px;letter-spacing:0.364px;color:#fff;font-weight:bold;">24</span>
</body></html>
